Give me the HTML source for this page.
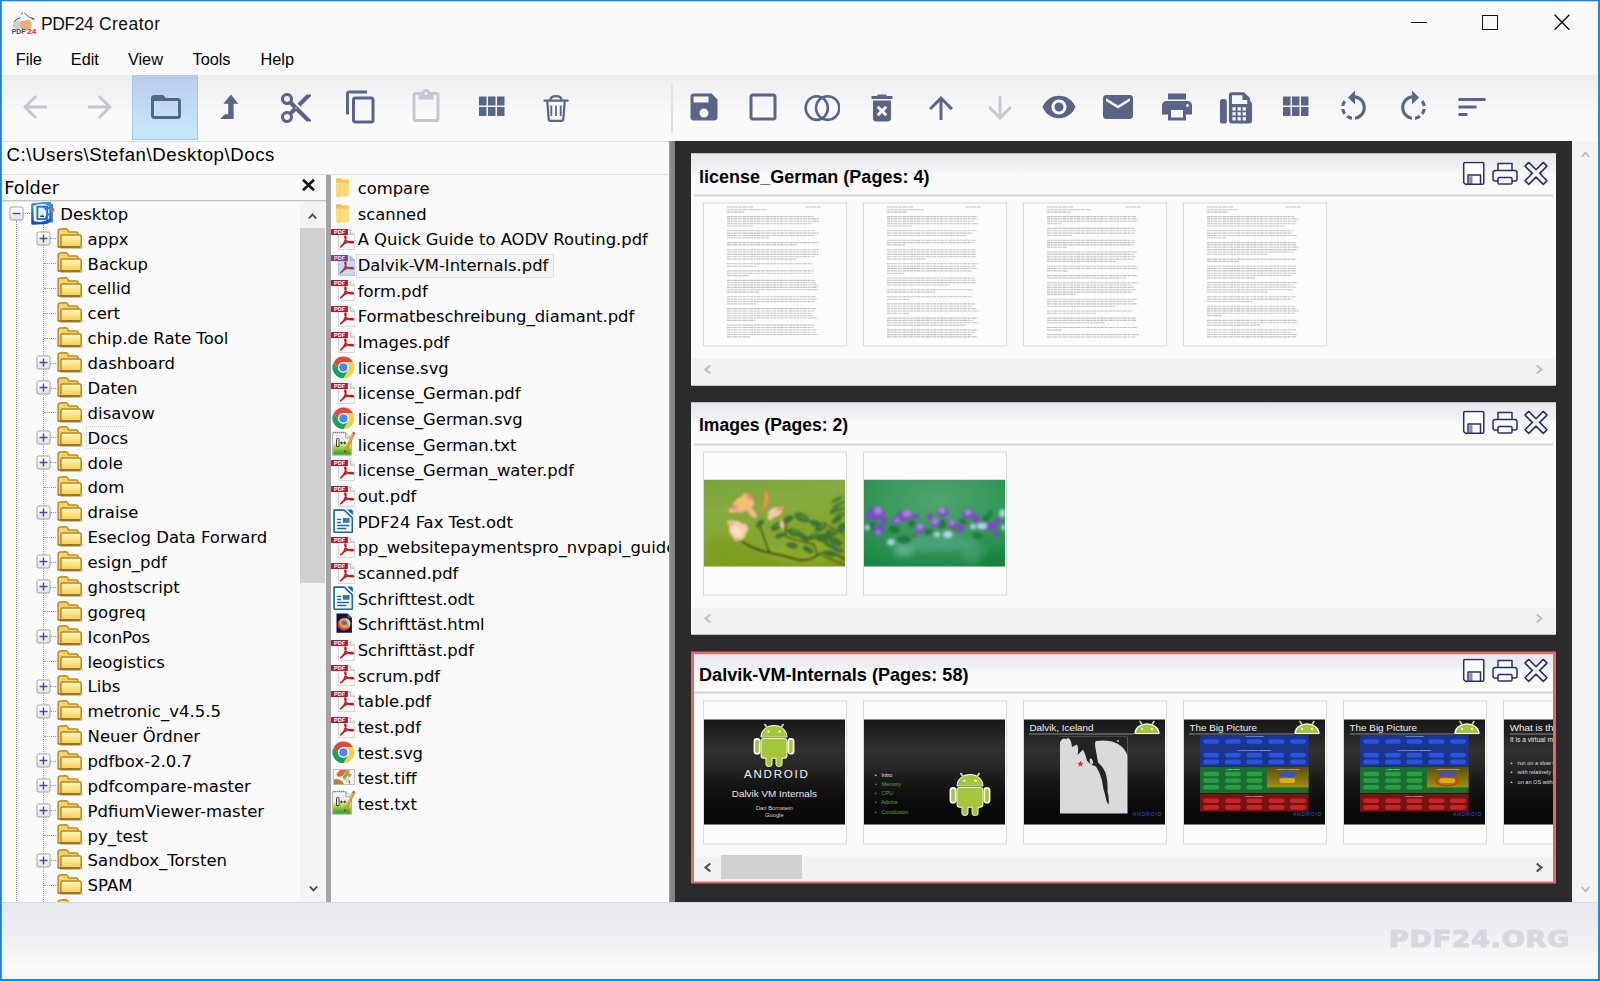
<!DOCTYPE html>
<html lang="en"><head><meta charset="utf-8"><title>PDF24 Creator</title>
<style>
*{box-sizing:border-box;margin:0;padding:0}
html,body{width:1600px;height:981px;overflow:hidden;background:#fafafa}
body{position:relative;font-family:"Liberation Sans",sans-serif;color:#000}
.a{position:absolute}
.t{position:absolute;white-space:pre;line-height:1}
.dj{font-family:"DejaVu Sans","Liberation Sans",sans-serif}
.tree{font-size:16.5px}
.fl{font-size:16.4px}
.ct{font-weight:bold;font-size:17.8px}
</style></head><body>

<svg width="0" height="0" style="position:absolute"><defs>
<linearGradient id="gbx" x1="0" y1="0" x2="0" y2="1"><stop offset="0" stop-color="#fff"/><stop offset=".5" stop-color="#fcfcfc"/><stop offset=".62" stop-color="#ececec"/><stop offset="1" stop-color="#e2e2e2"/></linearGradient>
<linearGradient id="gnp" x1="0" y1="0" x2="0" y2="1"><stop offset="0" stop-color="#f0f6c8"/><stop offset=".3" stop-color="#b7e05c"/><stop offset=".7" stop-color="#62b934"/><stop offset="1" stop-color="#2f9a2a"/></linearGradient>
<linearGradient id="gf1" x1="0" y1="0" x2="0" y2="1"><stop offset="0" stop-color="#fff8cc"/><stop offset=".45" stop-color="#fbe58a"/><stop offset="1" stop-color="#f1cd58"/></linearGradient>
<linearGradient id="gf2" x1="0" y1="0" x2="0" y2="1"><stop offset="0" stop-color="#f7e07c"/><stop offset="1" stop-color="#e9bf3c"/></linearGradient>
<symbol id="fold" viewBox="0 0 26 21">
 <path d="M3.200 20.300 H23.600 Q25.300 20.300 25.300 18.600" fill="none" stroke="#6b5210" stroke-opacity=".35" stroke-width="1.400"/>
 <path d="M1.100 18.800 V3.400 Q1.100 1.300 3.100 1.100 L8.300 .7 Q10.400 .7 10.900 2.300 L11.400 3.900 H19.200 Q20.900 3.900 20.900 5.700 V8" fill="#f5d768" stroke="#c18d24" stroke-width="1.500"/>
 <path d="M3.900 19 V8.700 Q3.900 7.100 5.500 7.100 H22.600 Q24.200 7.100 24.200 8.700 V17.400 Q24.200 19 22.600 19 Z" fill="url(#gf1)" stroke="#b98420" stroke-width="1.500"/>
 <path d="M1.100 18.200 Q1.100 19 2 19 H22.800" fill="none" stroke="#946a14" stroke-width="1.500"/>
</symbol>
<symbol id="wfold" viewBox="0 0 15 22">
 <path d="M1 2.2 Q1 1 2.2 1 H5.4 L6.8 2.6 H12.8 Q14 2.6 14 3.8 V19 H1 Z" fill="#f1c550"/>
 <path d="M1 5.4 H14 V18.6 Q14 19.4 13.2 19.4 H4.6 L4.6 21.2 L1 19.2 Z" fill="#fbdc7c"/>
 <path d="M4.8 5.4 V19.2" stroke="#f3cf66" stroke-width="1"/>
</symbol>
<symbol id="pdf" viewBox="0 0 24 21">
 <path d="M7.800 20.900 H23.600" stroke="#bdbdbd" stroke-width=".8" opacity=".7"/>
 <path d="M7.500 1 H19.400 L23.700 5.200 V20.300 H7.500 Z" fill="#fefefe" stroke="#d0d0d0" stroke-width=".9"/>
 <path d="M19.400 1 V5.200 H23.700" fill="#f0f0f0" stroke="#a8a8a8" stroke-width=".8"/>
 <path d="M9.500 17.900 C12 16.300 14.300 12.600 14.900 9 C15.200 7 13.900 6.500 13.900 8.100 C14.100 11.200 17 13.800 21.500 13.800 C22.800 13.800 22.600 12.500 20.900 12.500 C17 12.500 12.300 14.600 9.500 17.900 Z" fill="#c9262b" fill-opacity=".25" stroke="#c01a20" stroke-width="1.600" stroke-linejoin="round"/>
 <rect x="0" y="0" width="16.900" height="6.100" fill="#b01d2e"/>
 <text x="8.500" y="5.300" font-family="Liberation Sans,sans-serif" font-weight="bold" font-size="6" fill="#fff" text-anchor="middle" textLength="11" lengthAdjust="spacingAndGlyphs">PDF</text>
</symbol>
<symbol id="pdfs" viewBox="0 0 24 21">
 <path d="M7.800 20.900 H23.600" stroke="#9fb0c4" stroke-width=".8" opacity=".7"/>
 <path d="M7.500 1 H19.400 L23.700 5.200 V20.300 H7.500 Z" fill="#c5dbf1" stroke="#a9c0da" stroke-width=".9"/>
 <path d="M19.400 1 V5.200 H23.700" fill="#b4cbe6" stroke="#90a6c2" stroke-width=".8"/>
 <path d="M9.500 17.900 C12 16.300 14.300 12.600 14.900 9 C15.200 7 13.900 6.500 13.900 8.100 C14.100 11.200 17 13.800 21.500 13.800 C22.800 13.800 22.600 12.500 20.900 12.500 C17 12.500 12.300 14.600 9.500 17.900 Z" fill="#a63a5c" fill-opacity=".25" stroke="#a5385c" stroke-width="1.600" stroke-linejoin="round"/>
 <rect x="0" y="0" width="16.900" height="6.100" fill="#8c3f72"/>
 <text x="8.500" y="5.300" font-family="Liberation Sans,sans-serif" font-weight="bold" font-size="6" fill="#e9dff0" text-anchor="middle" textLength="11" lengthAdjust="spacingAndGlyphs">PDF</text>
</symbol>
<symbol id="chrome" viewBox="0 0 24 24">
 <circle cx="12" cy="12" r="11.3" fill="#fff"/>
 <path d="M2.04 6.25 A11.5 11.5 0 0 1 21.96 6.25 L12 6.25 A5.75 5.75 0 0 0 7.02 14.88 Z" fill="#dd4b3e"/>
 <path d="M2.04 6.25 A11.5 11.5 0 0 1 21.96 6.25 L12 6.25 A5.75 5.75 0 0 0 7.02 14.88 Z" fill="#ffcd42" transform="rotate(120 12 12)"/>
 <path d="M2.04 6.25 A11.5 11.5 0 0 1 21.96 6.25 L12 6.25 A5.75 5.75 0 0 0 7.02 14.88 Z" fill="#1aa15f" transform="rotate(240 12 12)"/>
 <circle cx="12" cy="12" r="5.400" fill="#f6f6f6"/>
 <circle cx="12" cy="12" r="4.300" fill="#4a8af4"/>
</symbol>
<symbol id="npp" viewBox="0 0 24 26">
 <path d="M.6 1.700 H14 L19.800 7 V24.800 H.6 Z" fill="#fcfcfa" stroke="#a9a9a4" stroke-width="1"/>
 <path d="M14 1.700 V7 H19.800" fill="#e4e4e0" stroke="#8e8e8a" stroke-width=".8"/>
 <path d="M1.200 1.500 h12.500" stroke="#7c7c78" stroke-width="1.300" stroke-dasharray="1 1"/>
 <path d="M2 5 h11 M2 7.500 h15 M2 10 h15" stroke="#cfe0ea" stroke-width=".7"/>
 <rect x="1.200" y="11.500" width="18" height="12.700" fill="url(#gnp)"/>
 <path d="M4.600 8.500 Q4.600 7.600 5.500 7.600 H6.300 Q7.200 7.600 7.200 8.500 V15.800 H4.600Z" fill="#f4f4f4" stroke="#222" stroke-width=".9"/>
 <path d="M8.300 12.100 h2.800 M9.700 10.700 v2.800 M11.600 12.100 h2.800 M13 10.700 v2.800" stroke="#1c1c1c" stroke-width=".9"/>
 <path d="M12.800 19.600 L20.900 2.300 L23 3.300 L14.900 20.600 L12.500 22.200 Z" fill="#eaa21e" stroke="#9a6510" stroke-width=".5"/>
 <path d="M14.200 16.600 L21.200 2.600" stroke="#f6c75a" stroke-width=".8"/>
 <path d="M20.900 2.300 L21.600 .8 L23.700 1.800 L23 3.300Z" fill="#c4352a"/>
 <path d="M12.800 19.600 L14.900 20.600 L12.500 22.200Z" fill="#4a3a20"/>
</symbol>
<symbol id="odt" viewBox="0 0 21 25">
 <path d="M1.100 1.200 H11.600 L19.700 9 V22.800 Q19.700 23.900 18.600 23.900 H2.200 Q1.100 23.900 1.100 22.800 Z" fill="#fdfeff" stroke="#186a9e" stroke-width="1.700" stroke-linejoin="round"/>
 <path d="M14.400 .6 H18.300 Q20.300 .6 20.300 2.600 V6.400 Z" fill="#0f6aa6"/>
 <path d="M4.200 10.600 h4 M4.200 13.700 h4 M4.200 16.900 h12.400 M4.200 20 h9.500" stroke="#186a9e" stroke-width="1.500"/>
 <rect x="10.400" y="9.600" width="6" height="3.900" fill="#2f7ab6" stroke="#186a9e" stroke-width=".8"/>
</symbol>
<symbol id="ffx" viewBox="0 0 17 21">
 <path d="M.5 .5 H11.800 L16.300 5 V20.300 H.5 Z" fill="#14124a"/>
 <path d="M11.800 .5 L16.300 5 H11.800Z" fill="#2a5ad0"/>
 <circle cx="8.300" cy="11.400" r="6.400" fill="#ff9a1e"/>
 <path d="M2 10 A6.400 6.400 0 0 0 14.600 12.600 A6.200 6.200 0 0 1 5.600 14.600 A5 5 0 0 1 4.600 7.200 Q2.600 7.800 2 10Z" fill="#f0322a"/>
 <path d="M9.500 4.800 Q13.800 5.600 14.700 10.400 Q14.600 13.600 12.600 15.600 Q14.200 11.600 11.200 9.400 Q10.200 6.800 9.500 4.800Z" fill="#ffd43a"/>
 <circle cx="8.600" cy="10.800" r="2.900" fill="#2a7af0"/>
 <path d="M6 11.400 Q8.600 13.400 11.400 11.600 Q10.200 14.600 7.600 14 Q6.400 13.200 6 11.400Z" fill="#ffb43a"/>
</symbol>
<symbol id="tif" viewBox="0 0 22 16">
 <rect x=".4" y=".4" width="21.200" height="15.200" fill="#f6f3ee" stroke="#b5b1aa" stroke-width=".8"/>
 <path d="M3.200 5.600 L7 .9 H14 L9.600 6.800 L5.600 8.200Z" fill="#f1632a"/>
 <path d="M13.800 1.200 L16.600 1 L16.200 4.400 L12.600 9.400 L11 11 L9.600 8.400Z" fill="#86b040"/>
 <path d="M14.600 5.600 L18.600 4.600 L18.200 7 L15.600 8.600Z" fill="#b8946a"/>
 <path d="M.9 10.400 Q5 9.200 9.600 12.400 L11 15.200 H.9Z" fill="#b5804a"/>
 <path d="M12.600 9.600 L13.600 14 M15 8.800 L15.600 13.600" stroke="#9a9a9a" stroke-width=".7"/>
 <path d="M16.200 11.600 L16.800 14.600" stroke="#cc3030" stroke-width="1"/>
</symbol>
<symbol id="robot" viewBox="0 0 60 70">
 <g fill="#a4c639" stroke="#fff" stroke-width="2.4" stroke-linejoin="round">
 <path d="M17 6 L21 12 M43 6 L39 12" stroke-linecap="round"/>
 <path d="M12 24 A18 16 0 0 1 48 24 Z"/>
 <rect x="12" y="27" width="36" height="28" rx="3.500"/>
 <rect x="2" y="27" width="7.6" height="22" rx="3.800"/>
 <rect x="50.400" y="27" width="7.6" height="22" rx="3.800"/>
 <rect x="19" y="50" width="7.6" height="17" rx="3.800"/>
 <rect x="33.400" y="50" width="7.6" height="17" rx="3.800"/>
 </g>
 <g fill="#a4c639"><path d="M12 24 A18 16 0 0 1 48 24 Z"/><rect x="12" y="27" width="36" height="28" rx="3.500"/><rect x="19" y="48" width="7.6" height="19" rx="3.800"/><rect x="33.400" y="48" width="7.600" height="19" rx="3.800"/>
 <path d="M17 6 L21 12 M43 6 L39 12" stroke="#a4c639" stroke-width="1.4" stroke-linecap="round"/></g>
 <circle cx="22" cy="16.500" r="1.700" fill="#fff"/><circle cx="38" cy="16.500" r="1.700" fill="#fff"/>
</symbol>
<symbol id="rhead" viewBox="0 0 40 24">
 <g fill="#a4c639" stroke="#fff" stroke-width="2" stroke-linejoin="round"><path d="M10 3 L13 8 M30 3 L27 8" stroke-linecap="round"/><path d="M3 22 A17 15 0 0 1 37 22 Z"/></g>
 <path d="M10 3 L13 8 M30 3 L27 8" stroke="#a4c639" stroke-width="1.200" stroke-linecap="round"/>
 <circle cx="13" cy="15" r="1.500" fill="#fff"/><circle cx="27" cy="15" r="1.500" fill="#fff"/>
</symbol>
<linearGradient id="oly" x1="0" y1="0" x2="0" y2="1"><stop offset="0" stop-color="#5c4c10"/><stop offset="1" stop-color="#a38c12"/></linearGradient>
<filter id="bl1"><feGaussianBlur stdDeviation="1.4"/></filter>
<filter id="bl2"><feGaussianBlur stdDeviation="3"/></filter>
<filter id="bl05"><feGaussianBlur stdDeviation="1.05"/></filter>
<filter id="bl0"><feGaussianBlur stdDeviation=".6"/></filter>
</defs></svg>

<div class="a" style="left:0;top:0;width:1600px;height:44px;background:#fafafa"></div>
<svg class="a" style="left:11px;top:9px" width="27" height="26" viewBox="0 0 27 26">
<g filter="url(#bl0)"><ellipse cx="9" cy="13" rx="6" ry="6.500" fill="#e3e3e3"/><ellipse cx="6.500" cy="16.500" rx="4.500" ry="4.200" fill="#cfcfcf"/><ellipse cx="9" cy="6" rx="4.500" ry="4" fill="#f1f1f1"/><ellipse cx="18" cy="16" rx="3" ry="5" fill="#c9c9c9"/>
<path d="M9.600 12.500 Q14.500 9 19.400 12.600 Q20.400 17 17.600 20 Q14.500 21.400 11 19.800 Q8.400 16.400 9.600 12.500Z" fill="#e9b06c"/>
<path d="M9.800 18 Q12.500 21.600 17 20.400 L15 21.400 Q11.600 21.600 9.800 18Z" fill="#5a6a82"/>
<ellipse cx="12.800" cy="9" rx="3.500" ry="2.800" fill="#fcfcfc"/></g>
<path d="M2.800 13 Q5.600 9.600 9.400 8.600 M10.200 5.400 Q11.200 3.600 12 3.600 M13.400 3.800 Q17 8.600 22.800 9.800" stroke="#2a2a2a" stroke-width=".8" fill="none"/>
<path d="M20.500 9.600 L23.400 10.400" stroke="#555" stroke-width="1.300"/>
<text x=".7" y="25.200" font-family="Liberation Sans,sans-serif" font-size="7.200" font-weight="bold" fill="#4a4a4a" textLength="13.800" lengthAdjust="spacingAndGlyphs">PDF</text>
<text x="15.800" y="25.200" font-family="Liberation Mono,monospace" font-weight="bold" font-size="7.600" fill="#ff1c1c" textLength="9.800" lengthAdjust="spacingAndGlyphs">24</text>
</svg>
<div class="t" style="left:41px;top:16.300px;font-size:17.5px;color:#101010"><span style="letter-spacing:-.45px">PDF24</span><span style="letter-spacing:.9px"> </span><span style="letter-spacing:.46px">Creator</span></div>
<div class="a" style="left:1411px;top:21.600px;width:16px;height:1.400px;background:#111"></div>
<div class="a" style="left:1482px;top:14.600px;width:15.600px;height:15.400px;border:1.400px solid #111"></div>
<svg class="a" style="left:1553px;top:13px" width="18" height="18" viewBox="0 0 18 18"><path d="M1.600 1.800 L16.400 16.800 M16.400 1.800 L1.600 16.800" stroke="#111" stroke-width="1.400"/></svg>
<div class="t" style="left:15.7px;top:50.500px;font-size:16.3px">File</div>
<div class="t" style="left:70.8px;top:50.500px;font-size:16.3px">Edit</div>
<div class="t" style="left:127.9px;top:50.500px;font-size:16.3px">View</div>
<div class="t" style="left:192.5px;top:50.500px;font-size:16.3px">Tools</div>
<div class="t" style="left:260.5px;top:50.500px;font-size:16.3px">Help</div>
<div class="a" style="left:2px;top:75px;width:1596px;height:66px;background:linear-gradient(#eeeef0 0,#f0f0f2 10px,#f4f4f6 24px,#fafafa 39px,#fafafa 66px)"></div>
<div class="a" style="left:132px;top:75px;width:66px;height:65px;background:linear-gradient(#b9cdea,#c2def5 60%,#c6e8f9);border:1px solid #9ccbf0;border-top-color:#b4cdec"></div>
<div class="a" style="left:670.500px;top:84px;width:2.600px;height:49px;background:#dfe1e7"></div>
<svg class="a" style="left:17.2px;top:89.3px" width="36" height="36" viewBox="0 0 24 24"><path fill="#c4c8d2" d="M20 11H7.83l5.59-5.59L12 4l-8 8 8 8 1.41-1.41L7.83 13H20v-2z"/></svg>
<svg class="a" style="left:82.0px;top:89.3px" width="36" height="36" viewBox="0 0 24 24"><path fill="#c4c8d2" d="M12 4l-1.41 1.41L16.17 11H4v2h12.17l-5.58 5.59L12 20l8-8z"/></svg>
<svg class="a" style="left:148.0px;top:89.3px" width="36" height="36" viewBox="0 0 24 24"><path fill="#586587" d="M20 6h-8l-2-2H4c-1.1 0-1.99.9-1.99 2L2 18c0 1.1.9 2 2 2h16c1.1 0 2-.9 2-2V8c0-1.1-.9-2-2-2zm0 12H4V8h16v10z"/></svg>
<svg class="a" style="left:211.5px;top:89.3px" width="36" height="36" viewBox="0 0 24 24"><path fill="#586587" d="M12.6 3.6 L17.6 9.9 H14.4 V20 H5.4 L8.6 16.9 H10.8 V9.9 H7.6 Z"/></svg>
<svg class="a" style="left:278.0px;top:89.5px" width="36" height="36" viewBox="0 0 24 24"><path fill="#586587" d="M9.64 7.64c.23-.5.36-1.05.36-1.64 0-2.21-1.79-4-4-4S2 3.79 2 6s1.79 4 4 4c.59 0 1.14-.13 1.64-.36L10 12l-2.36 2.36C7.14 14.13 6.59 14 6 14c-2.21 0-4 1.79-4 4s1.79 4 4 4 4-1.79 4-4c0-.59-.13-1.14-.36-1.64L12 14l7 7h3v-1L9.64 7.64zM6 8c-1.1 0-2-.89-2-2s.9-2 2-2 2 .89 2 2-.9 2-2 2zm0 12c-1.1 0-2-.89-2-2s.9-2 2-2 2 .89 2 2-.9 2-2 2zm6-7.5c-.28 0-.5-.22-.5-.5s.22-.5.5-.5.5.22.5.5-.22.5-.5.5zM19 3l-6 6 2 2 7-7V3z"/></svg>
<svg class="a" style="left:343.0px;top:89.3px" width="36" height="36" viewBox="0 0 24 24"><path fill="#586587" d="M16 1H4c-1.1 0-2 .9-2 2v14h2V3h12V1zm3 4H8c-1.1 0-2 .9-2 2v14c0 1.1.9 2 2 2h11c1.1 0 2-.9 2-2V7c0-1.1-.9-2-2-2zm0 16H8V7h11v14z"/></svg>
<svg class="a" style="left:408.1px;top:89.3px" width="36" height="36" viewBox="0 0 24 24"><path fill="#c4c8d2" d="M19 2h-4.18C14.4.84 13.3 0 12 0c-1.3 0-2.4.84-2.82 2H5c-1.1 0-2 .9-2 2v16c0 1.1.9 2 2 2h14c1.1 0 2-.9 2-2V4c0-1.1-.9-2-2-2zm-7 0c.55 0 1 .45 1 1s-.45 1-1 1-1-.45-1-1 .45-1 1-1zm7 18H5V4h2v3h10V4h2v16z"/></svg>
<svg class="a" style="left:473.3px;top:88.8px" width="36" height="36" viewBox="0 0 24 24"><path fill="#586587" d="M4 11h5V5H4v6zm0 7h5v-6H4v6zm6 0h5v-6h-5v6zm6 0h5v-6h-5v6zm-6-7h5V5h-5v6zm6-6v6h5V5h-5z"/></svg>
<svg class="a" style="left:538.3px;top:89.6px" width="36" height="36" viewBox="0 0 24 24"><g fill="none" stroke="#586587" stroke-linejoin="round"><path d="M4.300 7 H19.800" stroke-width="1.500" stroke-linecap="round"/><path d="M8.300 6.800 Q8.400 4.100 12 4.100 Q15.600 4.100 15.700 6.800" stroke-width="1.400"/><path d="M6.200 7.400 L7.100 19.300 Q7.200 20.600 8.500 20.600 H15.500 Q16.800 20.600 16.900 19.300 L17.800 7.400" stroke-width="1.500"/><path d="M8.900 10.300 V17.400 M12 10.300 V17.400 M15.100 10.300 V17.400" stroke-width="1.200"/></g></svg>
<svg class="a" style="left:686.2px;top:88.9px" width="36" height="36" viewBox="0 0 24 24"><path fill="#586587" d="M17 3H5c-1.11 0-2 .9-2 2v14c0 1.1.89 2 2 2h14c1.1 0 2-.9 2-2V7l-4-4zm-5 16c-1.66 0-3-1.34-3-3s1.34-3 3-3 3 1.34 3 3-1.34 3-3 3zm3-10H5V5h10v4z"/></svg>
<svg class="a" style="left:745.4px;top:88.9px" width="36" height="36" viewBox="0 0 24 24"><path fill="#586587" d="M19 5v14H5V5h14m0-2H5c-1.1 0-2 .9-2 2v14c0 1.1.9 2 2 2h14c1.1 0 2-.9 2-2V5c0-1.1-.9-2-2-2z"/></svg>
<svg class="a" style="left:804.1px;top:89.6px" width="36" height="36" viewBox="0 0 24 24"><g fill="none" stroke="#586587" stroke-width="1.700"><ellipse cx="8.500" cy="12" rx="7.400" ry="7.900"/><ellipse cx="15.800" cy="12" rx="7.800" ry="7.900"/></g></svg>
<svg class="a" style="left:863.6px;top:89.6px" width="36" height="36" viewBox="0 0 24 24"><path fill="#586587" d="M6 19c0 1.1.9 2 2 2h8c1.1 0 2-.9 2-2V7H6v12zm2.46-7.12l1.41-1.41L12 12.59l2.12-2.12 1.41 1.41L13.41 14l2.12 2.12-1.41 1.41L12 15.41l-2.12 2.12-1.41-1.41L10.59 14l-2.13-2.12zM15.5 4l-1-1h-5l-1 1H5v2h14V4z"/></svg>
<svg class="a" style="left:922.8px;top:89.6px" width="36" height="36" viewBox="0 0 24 24"><path fill="#586587" d="M4 12l1.41 1.41L11 7.83V20h2V7.83l5.58 5.59L20 12l-8-8-8 8z"/></svg>
<svg class="a" style="left:981.5px;top:89.6px" width="36" height="36" viewBox="0 0 24 24"><path fill="#c4c8d2" d="M20 12l-1.41-1.41L13 16.17V4h-2v12.17l-5.58-5.59L4 12l8 8 8-8z"/></svg>
<svg class="a" style="left:1040.7px;top:89.1px" width="36" height="36" viewBox="0 0 24 24"><path fill="#586587" d="M12 4.5C7 4.5 2.73 7.61 1 12c1.73 4.39 6 7.5 11 7.5s9.27-3.11 11-7.5c-1.73-4.39-6-7.5-11-7.5zM12 17c-2.76 0-5-2.24-5-5s2.24-5 5-5 5 2.24 5 5-2.24 5-5 5zm0-8c-1.66 0-3 1.34-3 3s1.34 3 3 3 3-1.34 3-3-1.34-3-3-3z"/></svg>
<svg class="a" style="left:1099.9px;top:89.3px" width="36" height="36" viewBox="0 0 24 24"><path fill="#586587" d="M20 4H4c-1.1 0-1.99.9-1.99 2L2 18c0 1.1.9 2 2 2h16c1.1 0 2-.9 2-2V6c0-1.1-.9-2-2-2zm0 4l-8 5-8-5V6l8 5 8-5v2z"/></svg>
<svg class="a" style="left:1158.9px;top:89.2px" width="36" height="36" viewBox="0 0 24 24"><path fill="#586587" d="M19 8H5c-1.66 0-3 1.34-3 3v6h4v4h12v-4h4v-6c0-1.66-1.34-3-3-3zm-3 11H8v-5h8v5zm3-7c-.55 0-1-.45-1-1s.45-1 1-1 1 .45 1 1-.45 1-1 1zm-1-9H6v4h12V3z"/></svg>
<svg class="a" style="left:1217.6px;top:90.1px" width="36" height="36" viewBox="0 0 24 24"><g fill="#586587"><rect x="1.300" y="6" width="4.600" height="16.400" rx="1.800"/><path d="M7.300 3.300 Q7.300 1.500 9.100 1.500 H17.400 L21.400 5.500 V7.400 Q22.700 7.900 22.700 9.600 V20.400 Q22.700 22.400 20.700 22.400 H9.300 Q7.300 22.400 7.300 20.400 Z"/></g><path d="M9.300 3.500 H16.300 V6.600 H19.500 V9.300 H9.300 Z" fill="#f6f6f8"/><g fill="#f6f6f8"><rect x="9.600" y="11.500" width="2.200" height="2.200"/><rect x="13" y="11.500" width="2.200" height="2.200"/><rect x="16.400" y="11.500" width="2.200" height="2.200"/><rect x="9.600" y="14.800" width="2.200" height="2.200"/><rect x="13" y="14.800" width="2.200" height="2.200"/><rect x="16.400" y="14.800" width="2.200" height="2.200"/><rect x="9.600" y="18.100" width="2.200" height="2.200"/><rect x="13" y="18.100" width="2.200" height="2.200"/><rect x="16.400" y="18.100" width="2.200" height="2.200"/></g></svg>
<svg class="a" style="left:1277.1px;top:88.8px" width="36" height="36" viewBox="0 0 24 24"><path fill="#586587" d="M4 11h5V5H4v6zm0 7h5v-6H4v6zm6 0h5v-6h-5v6zm6 0h5v-6h-5v6zm-6-7h5V5h-5v6zm6-6v6h5V5h-5z"/></svg>
<svg class="a" style="left:1334.8px;top:88.8px" width="37" height="37" viewBox="0 0 24 24"><path fill="#586587" d="M7.11 8.53L5.7 7.11C4.8 8.27 4.24 9.61 4.07 11h2.02c.14-.87.49-1.72 1.02-2.47zM6.09 13H4.07c.17 1.39.72 2.73 1.62 3.89l1.41-1.42c-.52-.75-.87-1.59-1.01-2.47zm1.01 5.32c1.16.9 2.51 1.44 3.9 1.61V17.9c-.87-.15-1.71-.49-2.46-1.03L7.1 18.32zM13 4.07V1L8.45 5.55 13 10V6.09c2.84.48 5 2.94 5 5.91s-2.16 5.43-5 5.91v2.02c3.95-.49 7-3.85 7-7.93s-3.05-7.44-7-7.93z"/></svg>
<svg class="a" style="left:1394.5px;top:88.8px" width="37" height="37" viewBox="0 0 24 24"><path fill="#586587" d="M15.55 5.55L11 1v3.07C7.06 4.56 4 7.92 4 12s3.05 7.44 7 7.93v-2.02c-2.84-.48-5-2.94-5-5.91s2.16-5.43 5-5.91V10l4.55-4.45zM19.93 11c-.17-1.39-.72-2.73-1.62-3.89l-1.42 1.42c.54.75.88 1.6 1.02 2.47h2.02zM13 17.9v2.02c1.39-.17 2.74-.71 3.9-1.61l-1.44-1.44c-.75.54-1.59.89-2.46 1.03zm3.89-2.42l1.42 1.41c.9-1.16 1.45-2.5 1.62-3.89h-2.02c-.14.87-.48 1.72-1.02 2.48z"/></svg>
<svg class="a" style="left:1453.8px;top:89.2px" width="36" height="36" viewBox="0 0 24 24"><path fill="#586587" d="M3 18h6v-2H3v2zM3 6v2h18V6H3zm0 7h12v-2H3v2z"/></svg>
<div class="a" style="left:2px;top:141px;width:667px;height:1px;background:#e0dede"></div>
<div class="t" style="left:6.600px;top:146.400px;font-size:18.67px;letter-spacing:.55px">C:\Users\Stefan\Desktop\Docs</div>
<div class="a" style="left:2px;top:174px;width:667px;height:1px;background:#e0dede"></div>
<div class="t dj" style="left:4.300px;top:180px;font-size:17.7px">Folder</div>
<svg class="a" style="left:300.500px;top:177.800px" width="15" height="14" viewBox="0 0 15 14"><path d="M2 1.800 L13 12.200 M13 1.800 L2 12.200" stroke="#111" stroke-width="2.700"/></svg>
<div class="a" style="left:2px;top:200px;width:324px;height:1px;background:#c2c2c2"></div><div class="a" style="left:2px;top:201px;width:324px;height:1px;background:#e4e4e4"></div>
<div class="a" style="left:2px;top:202px;width:324px;height:700px;overflow:hidden">
<div class="a" style="left:14px;top:19px;width:0;height:700px;border-left:1px dotted #9a9a9a"></div>
<div class="a" style="left:41px;top:22px;width:0;height:700px;border-left:1px dotted #9a9a9a"></div>
<div class="a" style="left:21px;top:11.4px;width:9px;height:0;border-top:1px dotted #9a9a9a"></div>
<svg class="a" style="left:6.65px;top:4.40px" width="15" height="15" viewBox="0 0 15 15"><rect x="1" y="1" width="13" height="13" rx="1.600" fill="url(#gbx)" stroke="#a0a0a0" stroke-width="1"/><path d="M3.500 7.500 H11.500" stroke="#3c4ba6" stroke-width="1.400"/></svg>
<svg class="a" style="left:28px;top:-2.0px" width="26" height="26" viewBox="0 0 26 26">
<defs><linearGradient id="gdk" x1="0" y1="0" x2="0" y2="1"><stop offset="0" stop-color="#3a96f2"/><stop offset=".5" stop-color="#1a74e2"/><stop offset="1" stop-color="#0a48be"/></linearGradient></defs>
<rect x="20.600" y="4" width="2.500" height="18.500" fill="#46525e" opacity=".75"/>
<path d="M1.200 4.400 Q1.200 3.300 2.300 3.200 L12.800 2.300 L13.600 1.100 H21.200 V21.800 L16.400 24 L3.200 24.800 Q1.200 24.800 1.200 22.900Z" fill="url(#gdk)"/>
<path d="M3.300 6.400 Q8 4.300 13.400 4.600 L19.300 6.200 V18.800 Q16 21.400 10.200 21.900 L3.900 21.200 Z" fill="#fdf7bc"/>
<path d="M3.300 6.400 Q8 4.300 13.400 4.600 L17 5.600" fill="none" stroke="#f4fbff" stroke-width="1.200"/>
<rect x="7.400" y="6.700" width="9.800" height="12.400" fill="#e6f2fb" stroke="#1c72e4" stroke-width="1.900"/>
<path d="M14 7 L16.600 10.200 M17.200 9.200 L19.600 7.400 M15.500 17.600 L19 13.600" stroke="#1c72e4" stroke-width="1.600"/>
<rect x="10.300" y="15.700" width="3.600" height="1.200" fill="#111"/><rect x="11.700" y="14.300" width="1.100" height="1.400" fill="#7a5a2a"/>
<circle cx="22.700" cy="10" r="1.900" fill="#f2731c"/><circle cx="22.700" cy="9.300" r=".8" fill="#e03a1a"/>
</svg>
<div class="t dj tree" style="left:58.3px;top:4.8px">Desktop</div>
<div class="a" style="left:48px;top:36.3px;width:8px;height:0;border-top:1px dotted #9a9a9a"></div>
<svg class="a" style="left:34.05px;top:28.97px" width="15" height="15" viewBox="0 0 15 15"><rect x="1" y="1" width="13" height="13" rx="1.600" fill="url(#gbx)" stroke="#a0a0a0" stroke-width="1"/><path d="M3.500 7.500 H11.500 M7.500 3.500 V11.500" stroke="#3c4ba6" stroke-width="1.400"/></svg>
<svg class="a" style="left:55.4px;top:25.5px" width="26" height="21"><use href="#fold"/></svg>
<div class="t dj tree" style="left:85.6px;top:29.7px">appx</div>
<div class="a" style="left:42px;top:61.1px;width:14px;height:0;border-top:1px dotted #9a9a9a"></div>
<svg class="a" style="left:55.4px;top:50.3px" width="26" height="21"><use href="#fold"/></svg>
<div class="t dj tree" style="left:85.6px;top:54.5px">Backup</div>
<div class="a" style="left:42px;top:86.0px;width:14px;height:0;border-top:1px dotted #9a9a9a"></div>
<svg class="a" style="left:55.4px;top:75.2px" width="26" height="21"><use href="#fold"/></svg>
<div class="t dj tree" style="left:85.6px;top:79.4px">cellid</div>
<div class="a" style="left:42px;top:110.9px;width:14px;height:0;border-top:1px dotted #9a9a9a"></div>
<svg class="a" style="left:55.4px;top:100.1px" width="26" height="21"><use href="#fold"/></svg>
<div class="t dj tree" style="left:85.6px;top:104.3px">cert</div>
<div class="a" style="left:42px;top:135.8px;width:14px;height:0;border-top:1px dotted #9a9a9a"></div>
<svg class="a" style="left:55.4px;top:124.9px" width="26" height="21"><use href="#fold"/></svg>
<div class="t dj tree" style="left:85.6px;top:129.1px">chip.de Rate Tool</div>
<div class="a" style="left:48px;top:160.6px;width:8px;height:0;border-top:1px dotted #9a9a9a"></div>
<svg class="a" style="left:34.05px;top:153.32px" width="15" height="15" viewBox="0 0 15 15"><rect x="1" y="1" width="13" height="13" rx="1.600" fill="url(#gbx)" stroke="#a0a0a0" stroke-width="1"/><path d="M3.500 7.500 H11.500 M7.500 3.500 V11.500" stroke="#3c4ba6" stroke-width="1.400"/></svg>
<svg class="a" style="left:55.4px;top:149.8px" width="26" height="21"><use href="#fold"/></svg>
<div class="t dj tree" style="left:85.6px;top:154.0px">dashboard</div>
<div class="a" style="left:48px;top:185.5px;width:8px;height:0;border-top:1px dotted #9a9a9a"></div>
<svg class="a" style="left:34.05px;top:178.19px" width="15" height="15" viewBox="0 0 15 15"><rect x="1" y="1" width="13" height="13" rx="1.600" fill="url(#gbx)" stroke="#a0a0a0" stroke-width="1"/><path d="M3.500 7.500 H11.500 M7.500 3.500 V11.500" stroke="#3c4ba6" stroke-width="1.400"/></svg>
<svg class="a" style="left:55.4px;top:174.7px" width="26" height="21"><use href="#fold"/></svg>
<div class="t dj tree" style="left:85.6px;top:178.9px">Daten</div>
<div class="a" style="left:42px;top:210.4px;width:14px;height:0;border-top:1px dotted #9a9a9a"></div>
<svg class="a" style="left:55.4px;top:199.6px" width="26" height="21"><use href="#fold"/></svg>
<div class="t dj tree" style="left:85.6px;top:203.8px">disavow</div>
<div class="a" style="left:48px;top:235.2px;width:8px;height:0;border-top:1px dotted #9a9a9a"></div>
<svg class="a" style="left:34.05px;top:227.93px" width="15" height="15" viewBox="0 0 15 15"><rect x="1" y="1" width="13" height="13" rx="1.600" fill="url(#gbx)" stroke="#a0a0a0" stroke-width="1"/><path d="M3.500 7.500 H11.500 M7.500 3.500 V11.500" stroke="#3c4ba6" stroke-width="1.400"/></svg>
<svg class="a" style="left:55.4px;top:224.4px" width="26" height="21"><use href="#fold"/></svg>
<div class="a" style="left:83.5px;top:224.2px;width:41.500px;height:23px;border:1px dotted #c9c9c9"></div>
<div class="t dj tree" style="left:85.6px;top:228.6px">Docs</div>
<div class="a" style="left:48px;top:260.1px;width:8px;height:0;border-top:1px dotted #9a9a9a"></div>
<svg class="a" style="left:34.05px;top:252.80px" width="15" height="15" viewBox="0 0 15 15"><rect x="1" y="1" width="13" height="13" rx="1.600" fill="url(#gbx)" stroke="#a0a0a0" stroke-width="1"/><path d="M3.500 7.500 H11.500 M7.500 3.500 V11.500" stroke="#3c4ba6" stroke-width="1.400"/></svg>
<svg class="a" style="left:55.4px;top:249.3px" width="26" height="21"><use href="#fold"/></svg>
<div class="t dj tree" style="left:85.6px;top:253.5px">dole</div>
<div class="a" style="left:42px;top:285.0px;width:14px;height:0;border-top:1px dotted #9a9a9a"></div>
<svg class="a" style="left:55.4px;top:274.2px" width="26" height="21"><use href="#fold"/></svg>
<div class="t dj tree" style="left:85.6px;top:278.4px">dom</div>
<div class="a" style="left:48px;top:309.8px;width:8px;height:0;border-top:1px dotted #9a9a9a"></div>
<svg class="a" style="left:34.05px;top:302.54px" width="15" height="15" viewBox="0 0 15 15"><rect x="1" y="1" width="13" height="13" rx="1.600" fill="url(#gbx)" stroke="#a0a0a0" stroke-width="1"/><path d="M3.500 7.500 H11.500 M7.500 3.500 V11.500" stroke="#3c4ba6" stroke-width="1.400"/></svg>
<svg class="a" style="left:55.4px;top:299.0px" width="26" height="21"><use href="#fold"/></svg>
<div class="t dj tree" style="left:85.6px;top:303.2px">draise</div>
<div class="a" style="left:42px;top:334.7px;width:14px;height:0;border-top:1px dotted #9a9a9a"></div>
<svg class="a" style="left:55.4px;top:323.9px" width="26" height="21"><use href="#fold"/></svg>
<div class="t dj tree" style="left:85.6px;top:328.1px">Eseclog Data Forward</div>
<div class="a" style="left:48px;top:359.6px;width:8px;height:0;border-top:1px dotted #9a9a9a"></div>
<svg class="a" style="left:34.05px;top:352.28px" width="15" height="15" viewBox="0 0 15 15"><rect x="1" y="1" width="13" height="13" rx="1.600" fill="url(#gbx)" stroke="#a0a0a0" stroke-width="1"/><path d="M3.500 7.500 H11.500 M7.500 3.500 V11.500" stroke="#3c4ba6" stroke-width="1.400"/></svg>
<svg class="a" style="left:55.4px;top:348.8px" width="26" height="21"><use href="#fold"/></svg>
<div class="t dj tree" style="left:85.6px;top:353.0px">esign_pdf</div>
<div class="a" style="left:48px;top:384.5px;width:8px;height:0;border-top:1px dotted #9a9a9a"></div>
<svg class="a" style="left:34.05px;top:377.15px" width="15" height="15" viewBox="0 0 15 15"><rect x="1" y="1" width="13" height="13" rx="1.600" fill="url(#gbx)" stroke="#a0a0a0" stroke-width="1"/><path d="M3.500 7.500 H11.500 M7.500 3.500 V11.500" stroke="#3c4ba6" stroke-width="1.400"/></svg>
<svg class="a" style="left:55.4px;top:373.7px" width="26" height="21"><use href="#fold"/></svg>
<div class="t dj tree" style="left:85.6px;top:377.9px">ghostscript</div>
<div class="a" style="left:42px;top:409.3px;width:14px;height:0;border-top:1px dotted #9a9a9a"></div>
<svg class="a" style="left:55.4px;top:398.5px" width="26" height="21"><use href="#fold"/></svg>
<div class="t dj tree" style="left:85.6px;top:402.7px">gogreq</div>
<div class="a" style="left:48px;top:434.2px;width:8px;height:0;border-top:1px dotted #9a9a9a"></div>
<svg class="a" style="left:34.05px;top:426.89px" width="15" height="15" viewBox="0 0 15 15"><rect x="1" y="1" width="13" height="13" rx="1.600" fill="url(#gbx)" stroke="#a0a0a0" stroke-width="1"/><path d="M3.500 7.500 H11.500 M7.500 3.500 V11.500" stroke="#3c4ba6" stroke-width="1.400"/></svg>
<svg class="a" style="left:55.4px;top:423.4px" width="26" height="21"><use href="#fold"/></svg>
<div class="t dj tree" style="left:85.6px;top:427.6px">IconPos</div>
<div class="a" style="left:42px;top:459.1px;width:14px;height:0;border-top:1px dotted #9a9a9a"></div>
<svg class="a" style="left:55.4px;top:448.3px" width="26" height="21"><use href="#fold"/></svg>
<div class="t dj tree" style="left:85.6px;top:452.5px">leogistics</div>
<div class="a" style="left:48px;top:483.9px;width:8px;height:0;border-top:1px dotted #9a9a9a"></div>
<svg class="a" style="left:34.05px;top:476.63px" width="15" height="15" viewBox="0 0 15 15"><rect x="1" y="1" width="13" height="13" rx="1.600" fill="url(#gbx)" stroke="#a0a0a0" stroke-width="1"/><path d="M3.500 7.500 H11.500 M7.500 3.500 V11.500" stroke="#3c4ba6" stroke-width="1.400"/></svg>
<svg class="a" style="left:55.4px;top:473.1px" width="26" height="21"><use href="#fold"/></svg>
<div class="t dj tree" style="left:85.6px;top:477.3px">Libs</div>
<div class="a" style="left:48px;top:508.8px;width:8px;height:0;border-top:1px dotted #9a9a9a"></div>
<svg class="a" style="left:34.05px;top:501.50px" width="15" height="15" viewBox="0 0 15 15"><rect x="1" y="1" width="13" height="13" rx="1.600" fill="url(#gbx)" stroke="#a0a0a0" stroke-width="1"/><path d="M3.500 7.500 H11.500 M7.500 3.500 V11.500" stroke="#3c4ba6" stroke-width="1.400"/></svg>
<svg class="a" style="left:55.4px;top:498.0px" width="26" height="21"><use href="#fold"/></svg>
<div class="t dj tree" style="left:85.6px;top:502.2px">metronic_v4.5.5</div>
<div class="a" style="left:42px;top:533.7px;width:14px;height:0;border-top:1px dotted #9a9a9a"></div>
<svg class="a" style="left:55.4px;top:522.9px" width="26" height="21"><use href="#fold"/></svg>
<div class="t dj tree" style="left:85.6px;top:527.1px">Neuer Ördner</div>
<div class="a" style="left:48px;top:558.5px;width:8px;height:0;border-top:1px dotted #9a9a9a"></div>
<svg class="a" style="left:34.05px;top:551.24px" width="15" height="15" viewBox="0 0 15 15"><rect x="1" y="1" width="13" height="13" rx="1.600" fill="url(#gbx)" stroke="#a0a0a0" stroke-width="1"/><path d="M3.500 7.500 H11.500 M7.500 3.500 V11.500" stroke="#3c4ba6" stroke-width="1.400"/></svg>
<svg class="a" style="left:55.4px;top:547.7px" width="26" height="21"><use href="#fold"/></svg>
<div class="t dj tree" style="left:85.6px;top:551.9px">pdfbox-2.0.7</div>
<div class="a" style="left:48px;top:583.4px;width:8px;height:0;border-top:1px dotted #9a9a9a"></div>
<svg class="a" style="left:34.05px;top:576.11px" width="15" height="15" viewBox="0 0 15 15"><rect x="1" y="1" width="13" height="13" rx="1.600" fill="url(#gbx)" stroke="#a0a0a0" stroke-width="1"/><path d="M3.500 7.500 H11.500 M7.500 3.500 V11.500" stroke="#3c4ba6" stroke-width="1.400"/></svg>
<svg class="a" style="left:55.4px;top:572.6px" width="26" height="21"><use href="#fold"/></svg>
<div class="t dj tree" style="left:85.6px;top:576.8px">pdfcompare-master</div>
<div class="a" style="left:48px;top:608.3px;width:8px;height:0;border-top:1px dotted #9a9a9a"></div>
<svg class="a" style="left:34.05px;top:600.98px" width="15" height="15" viewBox="0 0 15 15"><rect x="1" y="1" width="13" height="13" rx="1.600" fill="url(#gbx)" stroke="#a0a0a0" stroke-width="1"/><path d="M3.500 7.500 H11.500 M7.500 3.500 V11.500" stroke="#3c4ba6" stroke-width="1.400"/></svg>
<svg class="a" style="left:55.4px;top:597.5px" width="26" height="21"><use href="#fold"/></svg>
<div class="t dj tree" style="left:85.6px;top:601.7px">PdfiumViewer-master</div>
<div class="a" style="left:42px;top:633.1px;width:14px;height:0;border-top:1px dotted #9a9a9a"></div>
<svg class="a" style="left:55.4px;top:622.4px" width="26" height="21"><use href="#fold"/></svg>
<div class="t dj tree" style="left:85.6px;top:626.5px">py_test</div>
<div class="a" style="left:48px;top:658.0px;width:8px;height:0;border-top:1px dotted #9a9a9a"></div>
<svg class="a" style="left:34.05px;top:650.72px" width="15" height="15" viewBox="0 0 15 15"><rect x="1" y="1" width="13" height="13" rx="1.600" fill="url(#gbx)" stroke="#a0a0a0" stroke-width="1"/><path d="M3.500 7.500 H11.500 M7.500 3.500 V11.500" stroke="#3c4ba6" stroke-width="1.400"/></svg>
<svg class="a" style="left:55.4px;top:647.2px" width="26" height="21"><use href="#fold"/></svg>
<div class="t dj tree" style="left:85.6px;top:651.4px">Sandbox_Torsten</div>
<div class="a" style="left:42px;top:682.9px;width:14px;height:0;border-top:1px dotted #9a9a9a"></div>
<svg class="a" style="left:55.4px;top:672.1px" width="26" height="21"><use href="#fold"/></svg>
<div class="t dj tree" style="left:85.6px;top:676.3px">SPAM</div>
<div class="a" style="left:42px;top:707.8px;width:14px;height:0;border-top:1px dotted #9a9a9a"></div>
<svg class="a" style="left:55.4px;top:697.0px" width="26" height="21"><use href="#fold"/></svg>
<div class="t dj tree" style="left:85.6px;top:701.2px"></div>
<div class="a" style="left:298px;top:0;width:25px;height:700px;background:#f3f3f3"></div>
<div class="a" style="left:298px;top:25.7px;width:25px;height:355px;background:#d0d0d0"></div>
<svg class="a" style="left:305.2px;top:9.6px" width="11" height="9" viewBox="0 0 11 9"><path d="M1.800 6.500 L5.500 2.600 L9.200 6.500" fill="none" stroke="#454545" stroke-width="1.800"/></svg>
<svg class="a" style="left:305.5px;top:682.3px" width="11" height="9" viewBox="0 0 11 9"><path d="M1.800 2.500 L5.500 6.400 L9.200 2.500" fill="none" stroke="#454545" stroke-width="1.800"/></svg>
</div>
<div class="a" style="left:326px;top:175px;width:5px;height:727px;background:#a3a3a3"></div>
<div class="a" style="left:331px;top:175px;width:338px;height:727px;overflow:hidden;background:#fafafa">
<svg class="a" style="left:3.5px;top:2.3px" width="15" height="22"><use href="#wfold"/></svg>
<div class="t dj fl" style="left:26.69999999999999px;top:5.9px">compare</div>
<svg class="a" style="left:3.5px;top:28.0px" width="15" height="22"><use href="#wfold"/></svg>
<div class="t dj fl" style="left:26.69999999999999px;top:31.6px">scanned</div>
<svg class="a" style="left:0.10000000000002274px;top:54.0px" width="24" height="21"><use href="#pdf"/></svg>
<div class="t dj fl" style="left:26.69999999999999px;top:57.2px">A Quick Guide to AODV Routing.pdf</div>
<svg class="a" style="left:0.10000000000002274px;top:79.7px" width="24" height="21"><use href="#pdfs"/></svg>
<div class="a" style="left:25px;top:78.6px;width:198px;height:24.500px;border:1px dotted #cfcfcf;background:#f4f4f4"></div>
<div class="t dj fl" style="left:26.69999999999999px;top:82.9px">Dalvik-VM-Internals.pdf</div>
<svg class="a" style="left:0.10000000000002274px;top:105.4px" width="24" height="21"><use href="#pdf"/></svg>
<div class="t dj fl" style="left:26.69999999999999px;top:108.6px">form.pdf</div>
<svg class="a" style="left:0.10000000000002274px;top:131.1px" width="24" height="21"><use href="#pdf"/></svg>
<div class="t dj fl" style="left:26.69999999999999px;top:134.3px">Formatbeschreibung_diamant.pdf</div>
<svg class="a" style="left:0.10000000000002274px;top:156.7px" width="24" height="21"><use href="#pdf"/></svg>
<div class="t dj fl" style="left:26.69999999999999px;top:159.9px">Images.pdf</div>
<svg class="a" style="left:1.1999999999999886px;top:180.6px" width="22.800" height="22.800"><use href="#chrome"/></svg>
<div class="t dj fl" style="left:26.69999999999999px;top:185.6px">license.svg</div>
<svg class="a" style="left:0.10000000000002274px;top:208.1px" width="24" height="21"><use href="#pdf"/></svg>
<div class="t dj fl" style="left:26.69999999999999px;top:211.3px">license_German.pdf</div>
<svg class="a" style="left:1.1999999999999886px;top:231.9px" width="22.800" height="22.800"><use href="#chrome"/></svg>
<div class="t dj fl" style="left:26.69999999999999px;top:236.9px">license_German.svg</div>
<svg class="a" style="left:0.8999999999999773px;top:255.7px" width="23.500" height="25.500"><use href="#npp"/></svg>
<div class="t dj fl" style="left:26.69999999999999px;top:262.6px">license_German.txt</div>
<svg class="a" style="left:0.10000000000002274px;top:285.1px" width="24" height="21"><use href="#pdf"/></svg>
<div class="t dj fl" style="left:26.69999999999999px;top:288.3px">license_German_water.pdf</div>
<svg class="a" style="left:0.10000000000002274px;top:310.7px" width="24" height="21"><use href="#pdf"/></svg>
<div class="t dj fl" style="left:26.69999999999999px;top:313.9px">out.pdf</div>
<svg class="a" style="left:2.3000000000000114px;top:333.5px" width="20.600" height="24.500"><use href="#odt"/></svg>
<div class="t dj fl" style="left:26.69999999999999px;top:339.6px">PDF24 Fax Test.odt</div>
<svg class="a" style="left:0.10000000000002274px;top:362.1px" width="24" height="21"><use href="#pdf"/></svg>
<div class="t dj fl" style="left:26.69999999999999px;top:365.3px">pp_websitepaymentspro_nvpapi_guide.pdf</div>
<svg class="a" style="left:0.10000000000002274px;top:387.8px" width="24" height="21"><use href="#pdf"/></svg>
<div class="t dj fl" style="left:26.69999999999999px;top:390.9px">scanned.pdf</div>
<svg class="a" style="left:2.3000000000000114px;top:410.5px" width="20.600" height="24.500"><use href="#odt"/></svg>
<div class="t dj fl" style="left:26.69999999999999px;top:416.6px">Schrifttest.odt</div>
<svg class="a" style="left:4.5px;top:437.5px" width="16.600" height="20.500"><use href="#ffx"/></svg>
<div class="t dj fl" style="left:26.69999999999999px;top:442.3px">Schrifttäst.html</div>
<svg class="a" style="left:0.10000000000002274px;top:464.8px" width="24" height="21"><use href="#pdf"/></svg>
<div class="t dj fl" style="left:26.69999999999999px;top:468.0px">Schrifttäst.pdf</div>
<svg class="a" style="left:0.10000000000002274px;top:490.4px" width="24" height="21"><use href="#pdf"/></svg>
<div class="t dj fl" style="left:26.69999999999999px;top:493.6px">scrum.pdf</div>
<svg class="a" style="left:0.10000000000002274px;top:516.1px" width="24" height="21"><use href="#pdf"/></svg>
<div class="t dj fl" style="left:26.69999999999999px;top:519.3px">table.pdf</div>
<svg class="a" style="left:0.10000000000002274px;top:541.8px" width="24" height="21"><use href="#pdf"/></svg>
<div class="t dj fl" style="left:26.69999999999999px;top:545.0px">test.pdf</div>
<svg class="a" style="left:1.1999999999999886px;top:565.6px" width="22.800" height="22.800"><use href="#chrome"/></svg>
<div class="t dj fl" style="left:26.69999999999999px;top:570.6px">test.svg</div>
<svg class="a" style="left:1.8999999999999773px;top:594.0px" width="22" height="16"><use href="#tif"/></svg>
<div class="t dj fl" style="left:26.69999999999999px;top:596.3px">test.tiff</div>
<svg class="a" style="left:0.8999999999999773px;top:615.1px" width="23.500" height="25.500"><use href="#npp"/></svg>
<div class="t dj fl" style="left:26.69999999999999px;top:622.0px">test.txt</div>
</div>
<div class="a" style="left:669px;top:141px;width:6px;height:761px;background:linear-gradient(90deg,#a8a8a8 0,#8a8a8a 1.500px,#808080 100%)"></div>
<div class="a" style="left:675px;top:141px;width:897px;height:761px;background:#2b2b2b;overflow:hidden">
<div class="a" style="left:0;top:0;width:897px;height:0;transform:translateY(.5px)"><div class="a" style="left:16px;top:12px;width:865px;height:232px;background:#fafafa"></div><div class="a" style="left:16px;top:12px;width:865px;height:23px;background:linear-gradient(#e6e8ee,#eceef2 50%,#fafafa)"></div><div class="t ct" style="left:24px;top:26.2px;font-size:18.05px">license_German (Pages: 4)</div><div class="a" style="left:19px;top:53px;width:859px;height:1.500px;background:#d4d4d6"></div><svg class="a" style="left:786.5px;top:19.599999999999994px" width="88" height="25" viewBox="0 0 88 25"><g fill="#fdfdfd" stroke="#23306a" stroke-width="1.500" stroke-linejoin="round"><path d="M1.700 2.300 Q1.700 1 3 1 H20.500 Q21.800 1 21.800 2.300 V21.500 Q21.800 22.800 20.500 22.800 H3.500 L1.700 21 Z"/><rect x="6" y="13.500" width="12.500" height="9.300" fill="#fdfdfd"/><rect x="7.200" y="14.700" width="3.300" height="8" fill="#23306a" stroke="none" opacity=".55"/></g><g fill="#fdfdfd" stroke="#23306a" stroke-width="1.500" stroke-linejoin="round"><path d="M36 9 V2 H50 V9"/><path d="M33.500 9 H52.500 Q55 9 55 11.500 V17.500 Q55 19.500 53 19.500 H33 Q31 19.500 31 17.500 V11.500 Q31 9 33.500 9 Z"/><rect x="36" y="16" width="14" height="6.500" rx="1"/></g><path d="M63.0 4.6 L66.7 0.9 L74.0 8.2 L81.3 0.9 L85.0 4.6 L77.7 11.9 L85.0 19.2 L81.3 22.9 L74.0 15.6 L66.7 22.9 L63.0 19.2 L70.3 11.9 Z" fill="#fdfdfd" stroke="#23306a" stroke-width="1.600" stroke-linejoin="round"/></svg><div class="a" style="left:17px;top:217.0px;width:863px;height:27px;background:#f1f1f2"></div><svg class="a" style="left:27.5px;top:222.2px" width="10" height="12" viewBox="0 0 10 12"><path d="M7.300 2 L2.500 6 L7.300 10" fill="none" stroke="#bdbdbd" stroke-width="2"/></svg><svg class="a" style="left:858.5px;top:222.2px" width="10" height="12" viewBox="0 0 10 12"><path d="M2.700 2 L7.500 6 L2.700 10" fill="none" stroke="#bdbdbd" stroke-width="2"/></svg><div class="a" style="left:19px;top:57px;width:862px;height:156px;overflow:hidden"><div class="a" style="left:8.5px;top:4px;width:144px;height:144px;border:1px solid #dadadd;background:#fcfcfc"><svg class="a" style="left:-1px;top:-1px" width="144" height="144" viewBox="0 0 144 144"><path d="M24 4.5 h26 M103 4.5 h15 M24 7.3 h40 M24 9.6 h17 M24 14.1 h86.5 M24 16.4 h91.5 M24 18.8 h91.5 M24 21.2 h85.5 M24 23.5 h27 M24 28.3 h87.5 M24 30.6 h91.5 M24 33.0 h87.5 M24 35.3 h42 M24 40.1 h91.5 M24 42.4 h70 M24 47.2 h91.5 M24 49.5 h90.5 M24 51.9 h91.5 M24 54.2 h87.5 M24 56.6 h69 M24 61.3 h85.5 M24 63.7 h30 M24 68.4 h86.5 M24 70.8 h86.5 M24 73.1 h22 M24 77.9 h87.5 M24 80.2 h88.5 M24 82.5 h91.5 M24 84.9 h90.5 M24 87.2 h91.5 M24 89.6 h32 M24 94.3 h88.5 M24 96.7 h90.5 M24 99.0 h87.5 M24 101.4 h30 M24 106.1 h89.5 M24 108.5 h87.5 M24 110.8 h85.5 M24 113.2 h86.5 M24 115.5 h90.5 M24 117.9 h28 M24 122.6 h87.5 M24 125.0 h86.5 M24 127.3 h90.5 M24 129.7 h89.5 M24 132.0 h91.5 M24 134.4 h23" stroke="#8f8f8f" stroke-width="1.100" fill="none" opacity=".55" stroke-dasharray="3.200 .7 1.800 .6 4.100 .8 2.500 .6 1.200 .5 3.600 .7 2.200 .6"/></svg></div><div class="a" style="left:168.6px;top:4px;width:144px;height:144px;border:1px solid #dadadd;background:#fcfcfc"><svg class="a" style="left:-1px;top:-1px" width="144" height="144" viewBox="0 0 144 144"><path d="M24 4.5 h26 M103 4.5 h15 M24 7.3 h37 M24 9.6 h20 M24 14.1 h90.5 M24 16.4 h90.5 M24 18.8 h86.5 M24 21.2 h91.5 M24 23.5 h25 M24 28.3 h90.5 M24 30.6 h85.5 M24 33.0 h79 M24 37.7 h88.5 M24 40.1 h86.5 M24 42.4 h18 M24 47.2 h88.5 M24 49.5 h88.5 M24 51.9 h88.5 M24 54.2 h88.5 M24 56.6 h39 M24 61.3 h91.5 M24 63.7 h88.5 M24 66.0 h90.5 M24 68.4 h85.5 M24 70.7 h17 M24 75.5 h87.5 M24 77.8 h88.5 M24 80.1 h88.5 M24 82.5 h63 M24 87.2 h86.5 M24 89.6 h48 M24 94.3 h85.5 M24 96.7 h23 M24 101.4 h87.5 M24 103.8 h85.5 M24 106.1 h88.5 M24 108.5 h91.5 M24 110.8 h22 M24 115.6 h90.5 M24 117.9 h86.5 M24 120.3 h91.5 M24 122.6 h78 M24 127.4 h90.5 M24 129.7 h87.5 M24 132.1 h85.5 M24 134.4 h90.5" stroke="#8f8f8f" stroke-width="1.100" fill="none" opacity=".55" stroke-dasharray="3.200 .7 1.800 .6 4.100 .8 2.500 .6 1.200 .5 3.600 .7 2.200 .6"/></svg></div><div class="a" style="left:328.7px;top:4px;width:144px;height:144px;border:1px solid #dadadd;background:#fcfcfc"><svg class="a" style="left:-1px;top:-1px" width="144" height="144" viewBox="0 0 144 144"><path d="M24 4.5 h26 M103 4.5 h15 M24 7.3 h44 M24 9.6 h24 M24 14.1 h89.5 M24 16.4 h90.5 M24 18.8 h90.5 M24 21.2 h15 M24 25.9 h87.5 M24 28.3 h88.5 M24 30.6 h87.5 M24 33.0 h25 M24 37.7 h87.5 M24 40.1 h87.5 M24 42.4 h86.5 M24 44.8 h20 M24 49.5 h90.5 M24 51.9 h86.5 M24 54.2 h88.5 M24 56.6 h86.5 M24 58.9 h69 M24 63.7 h90.5 M24 66.0 h90.5 M24 68.4 h21 M24 73.1 h90.5 M24 75.5 h79 M24 80.2 h91.5 M24 82.5 h85.5 M24 84.9 h86.5 M24 87.2 h88.5 M24 89.6 h85.5 M24 91.9 h28 M24 96.7 h90.5 M24 99.0 h86.5 M24 101.4 h90.5 M24 103.7 h68 M24 108.5 h85.5 M24 110.8 h49 M24 115.6 h88.5 M24 117.9 h89.5 M24 120.3 h58 M24 125.0 h90.5 M24 127.4 h15 M24 132.1 h91.5 M24 134.5 h88.5" stroke="#8f8f8f" stroke-width="1.100" fill="none" opacity=".55" stroke-dasharray="3.200 .7 1.800 .6 4.100 .8 2.500 .6 1.200 .5 3.600 .7 2.200 .6"/></svg></div><div class="a" style="left:488.8px;top:4px;width:144px;height:144px;border:1px solid #dadadd;background:#fcfcfc"><svg class="a" style="left:-1px;top:-1px" width="144" height="144" viewBox="0 0 144 144"><path d="M24 4.5 h26 M103 4.5 h15 M24 7.3 h31 M24 9.6 h21 M24 14.1 h87.5 M24 16.4 h91.5 M24 18.8 h90.5 M24 21.2 h88.5 M24 23.5 h77 M24 28.3 h86.5 M24 30.6 h85.5 M24 33.0 h90.5 M24 35.3 h19 M24 40.1 h88.5 M24 42.4 h89.5 M24 44.8 h91.5 M24 47.1 h90.5 M24 49.5 h86.5 M24 51.8 h61 M24 56.6 h88.5 M24 58.9 h32 M24 63.7 h89.5 M24 66.0 h88.5 M24 68.4 h88.5 M24 70.7 h89.5 M24 73.0 h85.5 M24 75.4 h48 M24 80.1 h90.5 M24 82.5 h86.5 M24 84.8 h89.5 M24 87.2 h86.5 M24 89.5 h61 M24 94.3 h88.5 M24 96.6 h85.5 M24 99.0 h45 M24 103.7 h87.5 M24 106.1 h88.5 M24 108.4 h91.5 M24 110.8 h87.5 M24 113.1 h15 M24 117.9 h90.5 M24 120.2 h90.5 M24 122.6 h53 M24 127.3 h89.5 M24 129.7 h85.5 M24 132.0 h90.5 M24 134.4 h89.5" stroke="#8f8f8f" stroke-width="1.100" fill="none" opacity=".55" stroke-dasharray="3.200 .7 1.800 .6 4.100 .8 2.500 .6 1.200 .5 3.600 .7 2.200 .6"/></svg></div></div></div>
<div class="a" style="left:0;top:0;width:897px;height:0;transform:translateY(.5px)"><div class="a" style="left:16px;top:261px;width:865px;height:232px;background:#fafafa"></div><div class="a" style="left:16px;top:261px;width:865px;height:23px;background:linear-gradient(#e6e8ee,#eceef2 50%,#fafafa)"></div><div class="t ct" style="left:24px;top:275.2px;font-size:17.55px">Images (Pages: 2)</div><div class="a" style="left:19px;top:302px;width:859px;height:1.500px;background:#d4d4d6"></div><svg class="a" style="left:786.5px;top:268.6px" width="88" height="25" viewBox="0 0 88 25"><g fill="#fdfdfd" stroke="#23306a" stroke-width="1.500" stroke-linejoin="round"><path d="M1.700 2.300 Q1.700 1 3 1 H20.500 Q21.800 1 21.800 2.300 V21.500 Q21.800 22.800 20.500 22.800 H3.500 L1.700 21 Z"/><rect x="6" y="13.500" width="12.500" height="9.300" fill="#fdfdfd"/><rect x="7.200" y="14.700" width="3.300" height="8" fill="#23306a" stroke="none" opacity=".55"/></g><g fill="#fdfdfd" stroke="#23306a" stroke-width="1.500" stroke-linejoin="round"><path d="M36 9 V2 H50 V9"/><path d="M33.500 9 H52.500 Q55 9 55 11.500 V17.500 Q55 19.500 53 19.500 H33 Q31 19.500 31 17.500 V11.500 Q31 9 33.500 9 Z"/><rect x="36" y="16" width="14" height="6.500" rx="1"/></g><path d="M63.0 4.6 L66.7 0.9 L74.0 8.2 L81.3 0.9 L85.0 4.6 L77.7 11.9 L85.0 19.2 L81.3 22.9 L74.0 15.6 L66.7 22.9 L63.0 19.2 L70.3 11.9 Z" fill="#fdfdfd" stroke="#23306a" stroke-width="1.600" stroke-linejoin="round"/></svg><div class="a" style="left:17px;top:466.0px;width:863px;height:27px;background:#f1f1f2"></div><svg class="a" style="left:27.5px;top:471.2px" width="10" height="12" viewBox="0 0 10 12"><path d="M7.300 2 L2.500 6 L7.300 10" fill="none" stroke="#bdbdbd" stroke-width="2"/></svg><svg class="a" style="left:858.5px;top:471.2px" width="10" height="12" viewBox="0 0 10 12"><path d="M2.700 2 L7.500 6 L2.700 10" fill="none" stroke="#bdbdbd" stroke-width="2"/></svg><div class="a" style="left:19px;top:306px;width:862px;height:156px;overflow:hidden"><div class="a" style="left:8.5px;top:4px;width:144px;height:144px;border:1px solid #dadadd;background:#fcfcfc"><svg class="a" style="left:.5px;top:26.600px" width="141" height="87.500" viewBox="0 0 141 87.500"><defs><linearGradient id="p1" x1="0" y1="0" x2=".35" y2="1"><stop offset="0" stop-color="#78a238"/><stop offset=".35" stop-color="#86ab40"/><stop offset=".7" stop-color="#84a630"/><stop offset="1" stop-color="#7d9b1c"/></linearGradient><clipPath id="c1"><rect width="141" height="87.500"/></clipPath></defs><rect width="141" height="87.500" fill="url(#p1)"/><g clip-path="url(#c1)"><g filter="url(#bl2)"><ellipse cx="100" cy="70" rx="40" ry="14" fill="#8fae2c" opacity=".8"/><ellipse cx="20" cy="70" rx="20" ry="14" fill="#7a9a1c" opacity=".6"/></g><g filter="url(#bl05)"><g fill="#86a634" opacity=".9"><ellipse cx="71" cy="64.8" rx="8" ry="4" transform="rotate(20 71 64.8)"/><ellipse cx="80" cy="62" rx="7" ry="3.5" transform="rotate(-15 80 62)"/><ellipse cx="58" cy="62" rx="6" ry="3" transform="rotate(30 58 62)"/><ellipse cx="98" cy="64" rx="7" ry="3.4" transform="rotate(-10 98 64)"/><ellipse cx="92" cy="72" rx="6" ry="3" transform="rotate(15 92 72)"/><ellipse cx="119" cy="72" rx="6" ry="3" transform="rotate(-10 119 72)"/><ellipse cx="66" cy="54" rx="5" ry="2.6" transform="rotate(40 66 54)"/></g><g fill="none" stroke="#3a3612" stroke-linecap="round"><path d="M37.800 62.100 Q50 70 65.600 73.300 T92.400 79.800 T113.800 75.500 T141 80" stroke-width="1.500"/><path d="M56 46.600 Q60 60 65.600 73.300" stroke-width="1.300"/><path d="M81.700 43.400 V57.300 Q95 62 109.500 64.800 L113.800 75.500" stroke-width="1.200"/><path d="M124.500 46.600 L141 55.100 M118 76 L141 86" stroke-width="1"/></g><g fill="#3f7232"><ellipse cx="120" cy="58" rx="8" ry="4" transform="rotate(-10 120 58)"/><ellipse cx="132" cy="62" rx="7" ry="3.5" transform="rotate(30 132 62)"/><ellipse cx="112" cy="44" rx="7" ry="3" transform="rotate(20 112 44)"/><ellipse cx="138" cy="48" rx="5" ry="4" transform="rotate(-60 138 48)"/><ellipse cx="126" cy="74" rx="7" ry="3" transform="rotate(10 126 74)"/><ellipse cx="100" cy="58" rx="6" ry="3" transform="rotate(35 100 58)"/><ellipse cx="130" cy="31" rx="5" ry="2" transform="rotate(-40 130 31)"/><ellipse cx="88" cy="66" rx="6" ry="3" transform="rotate(10 88 66)"/><ellipse cx="76" cy="56" rx="5" ry="2.5" transform="rotate(-20 76 56)"/><ellipse cx="97.8" cy="38" rx="8" ry="4" transform="rotate(25 97.8 38)"/><ellipse cx="73" cy="46.6" rx="7" ry="3.6" transform="rotate(-35 73 46.6)"/><ellipse cx="90.3" cy="53" rx="7.5" ry="3.6" transform="rotate(15 90.3 53)"/><ellipse cx="117" cy="47.6" rx="7" ry="3.4" transform="rotate(-30 117 47.6)"/><ellipse cx="124.5" cy="63.7" rx="7" ry="3.4" transform="rotate(40 124.5 63.7)"/><ellipse cx="134" cy="70" rx="6" ry="3" transform="rotate(20 134 70)"/><ellipse cx="128" cy="53" rx="6" ry="3" transform="rotate(10 128 53)"/><ellipse cx="110" cy="57" rx="6" ry="3" transform="rotate(-20 110 57)"/><ellipse cx="84" cy="40" rx="6" ry="3.2" transform="rotate(-30 84 40)"/><ellipse cx="133" cy="40" rx="6" ry="2.6" transform="rotate(-35 133 40)"/><ellipse cx="56" cy="44" rx="5" ry="2.6" transform="rotate(-50 56 44)"/><ellipse cx="104" cy="70" rx="6" ry="3" transform="rotate(30 104 70)"/></g><g fill="#4c8236"><ellipse cx="133" cy="20" rx="7" ry="1.8" transform="rotate(-30 133 20)"/><ellipse cx="135" cy="25" rx="7" ry="1.8" transform="rotate(-25 135 25)"/><ellipse cx="136" cy="30" rx="7" ry="1.8" transform="rotate(-18 136 30)"/><ellipse cx="137" cy="35" rx="6" ry="1.8" transform="rotate(-10 137 35)"/></g><g fill="#5d9040" opacity=".8"><ellipse cx="98.8" cy="37" rx="4.4" ry="1.8" transform="rotate(25 98.8 37)"/><ellipse cx="74" cy="45.6" rx="3.8500000000000005" ry="1.62" transform="rotate(-35 74 45.6)"/><ellipse cx="91.3" cy="52" rx="4.125" ry="1.62" transform="rotate(15 91.3 52)"/><ellipse cx="118" cy="46.6" rx="3.8500000000000005" ry="1.53" transform="rotate(-30 118 46.6)"/><ellipse cx="125.5" cy="62.7" rx="3.8500000000000005" ry="1.53" transform="rotate(40 125.5 62.7)"/><ellipse cx="135" cy="69" rx="3.3000000000000003" ry="1.35" transform="rotate(20 135 69)"/><ellipse cx="129" cy="52" rx="3.3000000000000003" ry="1.35" transform="rotate(10 129 52)"/><ellipse cx="111" cy="56" rx="3.3000000000000003" ry="1.35" transform="rotate(-20 111 56)"/></g><g fill="#f4b68a"><ellipse cx="37.8" cy="25.2" rx="9" ry="7.5" transform="rotate(-25 37.8 25.2)"/><ellipse cx="44" cy="21" rx="5" ry="8" transform="rotate(-35 44 21)"/><ellipse cx="30" cy="30" rx="6" ry="3" transform="rotate(-20 30 30)"/><ellipse cx="48" cy="33" rx="3" ry="7" transform="rotate(-40 48 33)"/></g><g fill="#f3c35a"><ellipse cx="38" cy="23" rx="4.5" ry="5.5" transform="rotate(-25 38 23)"/></g><g fill="#ef8c74"><ellipse cx="30.5" cy="28" rx="3.5" ry="1.8" transform="rotate(-25 30.5 28)"/><ellipse cx="45" cy="17" rx="2.2" ry="4" transform="rotate(-30 45 17)"/></g><path d="M61.500 9 Q66.500 16 63.500 24 Q61.500 30 58.200 33.500 Q59.500 26 60 20 Q59.500 14 61.500 9Z" fill="#ee7e3e"/><path d="M62 12 Q64.500 17 62.800 23 Q61.600 27 60.400 29 Q61.200 20 62 12Z" fill="#f4a452"/><g fill="#f4cba8"><ellipse cx="71" cy="32.7" rx="7.5" ry="4.6" transform="rotate(-20 71 32.7)"/><ellipse cx="67" cy="36" rx="3" ry="5" transform="rotate(20 67 36)"/><ellipse cx="78" cy="45" rx="1.8" ry="4" transform="rotate(-10 78 45)"/></g><g fill="#f09a86"><ellipse cx="76" cy="29.5" rx="4" ry="2" transform="rotate(-30 76 29.5)"/></g><g fill="#f6cfa8"><ellipse cx="33.5" cy="50.9" rx="8" ry="10" transform="rotate(-30 33.5 50.9)"/><ellipse cx="28" cy="44" rx="5" ry="3" transform="rotate(25 28 44)"/><ellipse cx="40" cy="49" rx="4" ry="5" transform="rotate(-10 40 49)"/></g><g fill="#f8e2c0"><ellipse cx="33" cy="52" rx="4" ry="6" transform="rotate(-30 33 52)"/></g><g fill="#f2a88e"><ellipse cx="27.5" cy="43.5" rx="3" ry="1.5" transform="rotate(25 27.5 43.5)"/><ellipse cx="32" cy="60" rx="2.5" ry="2"/></g></g></g></svg></div><div class="a" style="left:168.6px;top:4px;width:144px;height:144px;border:1px solid #dadadd;background:#fcfcfc"><svg class="a" style="left:.5px;top:26.600px" width="141" height="87.500" viewBox="0 0 141 87.500"><defs><radialGradient id="p2" cx=".52" cy=".25" r=".85"><stop offset="0" stop-color="#4fa56e"/><stop offset=".45" stop-color="#3a9a5c"/><stop offset=".8" stop-color="#268e4c"/><stop offset="1" stop-color="#1a8642"/></radialGradient><clipPath id="c2"><rect width="141" height="87.500"/></clipPath></defs><rect width="141" height="87.500" fill="url(#p2)"/><g clip-path="url(#c2)"><g filter="url(#bl2)"><ellipse cx="70" cy="64" rx="45" ry="8" fill="#4fa888" opacity=".7"/><ellipse cx="40" cy="72" rx="10" ry="5" fill="#7fc0b8" opacity=".6"/><ellipse cx="110" cy="74" rx="12" ry="8" fill="#48a070" opacity=".7"/><ellipse cx="128" cy="80" rx="14" ry="8" fill="#15803c" opacity=".8"/></g><g filter="url(#bl1)"><g fill="#1d7a3c"><ellipse cx="77.4" cy="44.4" rx="5" ry="5"/><ellipse cx="9" cy="47" rx="5" ry="5"/><ellipse cx="122.4" cy="39" rx="3.6" ry="3.6"/><ellipse cx="126" cy="34" rx="2.5" ry="2.8"/><ellipse cx="30" cy="50" rx="6" ry="4"/><ellipse cx="48" cy="44" rx="4" ry="4"/><ellipse cx="99" cy="42" rx="4" ry="4"/><ellipse cx="40" cy="60" rx="8" ry="4"/><ellipse cx="64" cy="52" rx="5" ry="3"/><ellipse cx="114" cy="56" rx="5" ry="3"/></g><g fill="#7a4cc2"><ellipse cx="12.1" cy="33.7" rx="8" ry="7"/><ellipse cx="41" cy="35.9" rx="8" ry="5.5"/><ellipse cx="32.4" cy="41.2" rx="4.5" ry="3.6"/><ellipse cx="56" cy="48.7" rx="5.5" ry="5"/><ellipse cx="71" cy="43.4" rx="5" ry="4"/><ellipse cx="78.5" cy="32.7" rx="6" ry="5"/><ellipse cx="88.1" cy="44.4" rx="5" ry="4.5"/><ellipse cx="96.7" cy="48.7" rx="4" ry="4.5"/><ellipse cx="104.2" cy="34.8" rx="6.5" ry="5"/><ellipse cx="112.7" cy="40.1" rx="3.6" ry="4"/><ellipse cx="127.7" cy="46.6" rx="5" ry="4.5"/><ellipse cx="132" cy="55.1" rx="2.6" ry="3"/><ellipse cx="15.3" cy="48.7" rx="5" ry="4"/><ellipse cx="13.2" cy="54" rx="4" ry="3"/><ellipse cx="4.6" cy="37" rx="3.5" ry="4"/><ellipse cx="20" cy="41" rx="3" ry="4"/><ellipse cx="66" cy="37" rx="3" ry="3.5"/><ellipse cx="52" cy="37" rx="3" ry="2.5"/><ellipse cx="134" cy="42" rx="3" ry="3.5"/><ellipse cx="119" cy="49" rx="3" ry="3"/></g><g fill="#a884e2"><ellipse cx="14" cy="31" rx="4" ry="3.5"/><ellipse cx="43" cy="34" rx="4.5" ry="3"/><ellipse cx="56" cy="47" rx="3.5" ry="3"/><ellipse cx="71" cy="42" rx="3.5" ry="2.5"/><ellipse cx="78" cy="31" rx="3.5" ry="2.8"/><ellipse cx="88" cy="43" rx="3" ry="2.6"/><ellipse cx="104" cy="33" rx="3.5" ry="2.8"/><ellipse cx="33" cy="41" rx="2.6" ry="2"/><ellipse cx="14" cy="53" rx="2.5" ry="2"/></g><g fill="#bcd4ee"><ellipse cx="83.8" cy="55" rx="5" ry="3.6"/><ellipse cx="118" cy="46.6" rx="5" ry="3.2"/><ellipse cx="27" cy="62.6" rx="3.6" ry="3.2"/><ellipse cx="138.4" cy="33.7" rx="3" ry="4"/><ellipse cx="139.5" cy="48" rx="2" ry="3"/><ellipse cx="109" cy="47" rx="3" ry="2.5"/><ellipse cx="73" cy="55" rx="3" ry="2.5"/><ellipse cx="3" cy="48" rx="2.5" ry="2.5"/></g><g fill="#8a3a4a" opacity=".7"><ellipse cx="90" cy="50" rx="2" ry="2"/><ellipse cx="50" cy="56" rx="3" ry="1.5"/></g></g></g></svg></div></div></div>
<div class="a" style="left:0;top:0;width:897px;height:0;transform:translateY(.5px)"><div class="a" style="left:16px;top:510px;width:865px;height:232px;background:#e26a6a"></div><div class="a" style="left:19px;top:513px;width:859px;height:226px;background:#fafafa"></div><div class="a" style="left:19px;top:513px;width:859px;height:20px;background:linear-gradient(#e6e8ee,#eceef2 50%,#fafafa)"></div><div class="t ct" style="left:24px;top:524.2px;font-size:18.1px">Dalvik-VM-Internals (Pages: 58)</div><div class="a" style="left:19px;top:550px;width:859px;height:1.500px;background:#d4d4d6"></div><svg class="a" style="left:786.5px;top:516.6px" width="88" height="25" viewBox="0 0 88 25"><g fill="#fdfdfd" stroke="#23306a" stroke-width="1.500" stroke-linejoin="round"><path d="M1.700 2.300 Q1.700 1 3 1 H20.500 Q21.800 1 21.800 2.300 V21.500 Q21.800 22.800 20.500 22.800 H3.500 L1.700 21 Z"/><rect x="6" y="13.500" width="12.500" height="9.300" fill="#fdfdfd"/><rect x="7.200" y="14.700" width="3.300" height="8" fill="#23306a" stroke="none" opacity=".55"/></g><g fill="#fdfdfd" stroke="#23306a" stroke-width="1.500" stroke-linejoin="round"><path d="M36 9 V2 H50 V9"/><path d="M33.500 9 H52.500 Q55 9 55 11.500 V17.500 Q55 19.500 53 19.500 H33 Q31 19.500 31 17.500 V11.500 Q31 9 33.500 9 Z"/><rect x="36" y="16" width="14" height="6.500" rx="1"/></g><path d="M63.0 4.6 L66.7 0.9 L74.0 8.2 L81.3 0.9 L85.0 4.6 L77.7 11.9 L85.0 19.2 L81.3 22.9 L74.0 15.6 L66.7 22.9 L63.0 19.2 L70.3 11.9 Z" fill="#fdfdfd" stroke="#23306a" stroke-width="1.600" stroke-linejoin="round"/></svg><div class="a" style="left:19px;top:715.0px;width:859px;height:25px;background:#f1f1f2"></div><svg class="a" style="left:27.5px;top:720.2px" width="10" height="12" viewBox="0 0 10 12"><path d="M7.300 2 L2.500 6 L7.300 10" fill="none" stroke="#4a4a4a" stroke-width="2"/></svg><svg class="a" style="left:858.5px;top:720.2px" width="10" height="12" viewBox="0 0 10 12"><path d="M2.700 2 L7.500 6 L2.700 10" fill="none" stroke="#4a4a4a" stroke-width="2"/></svg><div class="a" style="left:19px;top:555px;width:859px;height:156px;overflow:hidden"><div class="a" style="left:8.5px;top:4px;width:144px;height:144px;border:1px solid #dadadd;background:#fcfcfc"><div class="a" style="left:.3px;top:17.700px;width:141.200px;height:105.500px;background:linear-gradient(#171717 0,#232323 14%,#313131 30%,#2c2c2c 33%,#2a2a2a 42%,#191919 58%,#0b0b0b 80%,#080808 100%);overflow:hidden;color:#fff"><svg class="a" style="left:49.500px;top:1.800px" width="42" height="47.500" viewBox="0 0 60 70" preserveAspectRatio="none"><use href="#robot"/></svg><div class="t" style="left:40.2px;top:48.6px;font-size:11.6px;letter-spacing:1.75px;color:#f4f4f4;font-weight:normal">ANDROID</div><div class="t" style="left:0;width:141px;text-align:center;top:69.800px;font-size:9.900px;color:#e9e9e9">Dalvik VM Internals</div>
<div class="t" style="left:0;width:141px;text-align:center;top:86px;font-size:5.800px;color:#d8d8d8">Dan Bornstein</div>
<div class="t" style="left:0;width:141px;text-align:center;top:93px;font-size:5.800px;color:#d8d8d8">Google</div></div></div><div class="a" style="left:168.6px;top:4px;width:144px;height:144px;border:1px solid #dadadd;background:#fcfcfc"><div class="a" style="left:.3px;top:17.700px;width:141.200px;height:105.500px;background:linear-gradient(#171717 0,#232323 14%,#313131 30%,#2c2c2c 33%,#2a2a2a 42%,#191919 58%,#0b0b0b 80%,#080808 100%);overflow:hidden;color:#fff"><svg class="a" style="left:85px;top:50px" width="42" height="47.500" viewBox="0 0 60 70" preserveAspectRatio="none"><use href="#robot"/></svg>
<div class="t" style="left:10.800px;top:51.600px;font-size:5.400px;line-height:9.070px;color:#5aa53c"><span style="color:#e4e4e4">•&#8202;   Intro</span>
•&#8202;   Memory
•&#8202;   CPU
•&#8202;   Advice
•&#8202;   Conclusion</div></div></div><div class="a" style="left:328.7px;top:4px;width:144px;height:144px;border:1px solid #dadadd;background:#fcfcfc"><div class="a" style="left:.3px;top:17.700px;width:141.200px;height:105.500px;background:linear-gradient(#171717 0,#232323 14%,#313131 30%,#2c2c2c 33%,#2a2a2a 42%,#191919 58%,#0b0b0b 80%,#080808 100%);overflow:hidden;color:#fff"><div class="t" style="left:5.400px;top:3.300px;font-size:9.900px;color:#efefef">Dalvik, Iceland</div><div class="a" style="left:5.400px;top:14.600px;width:105px;height:1px;background:#8a8a8a"></div><svg class="a" style="left:109.300px;top:.2px" width="28" height="15.300" viewBox="0 0 40 24" preserveAspectRatio="none"><use href="#rhead"/></svg><div class="t" style="left:108.8px;top:92.6px;font-size:5.2px;letter-spacing:0.75px;color:#3555c8;font-weight:normal">ANDROID</div><svg class="a" style="left:36.500px;top:17px" width="67.500" height="77.800" viewBox="0 0 67.500 77.800">
<rect width="67.500" height="77.800" fill="#dadada"/>
<path d="M0 0 H67.500 V20 Q66 12 58 7.500 Q50 3 36 4.500 Q34.500 5 35.500 12 Q37 20 38 26 Q45 32 46.500 40 Q48 48 47.500 55 Q49.500 62 48.500 68 Q46.500 66 45.500 60 Q43 52 42 44 Q40 36 36 30 Q30 28 27 24 Q25.500 18 23 13 L17.500 18.500 Q19 12 17 8 L12 10.500 Q11.500 5 9.500 2.500 Q7 .5 6.500 3 Q4 1.500 2.500 2.500 Q.5 3.500 0 6 Z" fill="#232323"/>
<ellipse cx="31.300" cy="25" rx="1.500" ry="3" fill="#dadada" transform="rotate(-15 31.300 25)"/>
<circle cx="58" cy="4.500" r=".9" fill="#dadada"/>
<path d="M20.400 24.300 l.9 2 2.200 .2 -1.650 1.450 .5 2.150 -1.950 -1.150 -1.950 1.150 .5 -2.150 -1.650 -1.450 2.200 -.2z" fill="#e0301c"/>
</svg></div></div><div class="a" style="left:488.8px;top:4px;width:144px;height:144px;border:1px solid #dadadd;background:#fcfcfc"><div class="a" style="left:.3px;top:17.700px;width:141.200px;height:105.500px;background:linear-gradient(#171717 0,#232323 14%,#313131 30%,#2c2c2c 33%,#2a2a2a 42%,#191919 58%,#0b0b0b 80%,#080808 100%);overflow:hidden;color:#fff"><div class="t" style="left:5.400px;top:3.300px;font-size:9.900px;color:#efefef">The Big Picture</div><div class="a" style="left:5.400px;top:14.600px;width:105px;height:1px;background:#8a8a8a"></div><svg class="a" style="left:109.300px;top:.2px" width="28" height="15.300" viewBox="0 0 40 24" preserveAspectRatio="none"><use href="#rhead"/></svg><div class="t" style="left:108.8px;top:92.6px;font-size:5.2px;letter-spacing:0.75px;color:#3555c8;font-weight:normal">ANDROID</div><svg class="a" style="left:16.300px;top:15px" width="108.600" height="77.800" viewBox="0 0 108.600 77.800"><rect x="0" y="0" width="108.600" height="13.400" fill="#1b3592"/><rect x="0" y="13.900" width="108.600" height="18" fill="#1b3592"/><rect x="0" y="32.400" width="108.600" height="26.200" fill="#1a6c30"/><rect x="66.900" y="32.400" width="41.700" height="20.500" fill="url(#oly)"/><rect x="0" y="59.200" width="108.600" height="18.600" fill="#761212"/><rect x="3.2" y="4.7" width="16" height="4.6" rx="2.300" fill="#2b55d6"/><rect x="24.9" y="4.7" width="16" height="4.6" rx="2.300" fill="#2b55d6"/><rect x="46.5" y="4.7" width="16" height="4.6" rx="2.300" fill="#2b55d6"/><rect x="68.4" y="4.7" width="16" height="4.6" rx="2.300" fill="#2b55d6"/><rect x="90" y="4.7" width="16" height="4.6" rx="2.300" fill="#2b55d6"/><rect x="3.2" y="18.3" width="16" height="4.6" rx="2.300" fill="#2b55d6"/><rect x="24.9" y="18.3" width="16" height="4.6" rx="2.300" fill="#2b55d6"/><rect x="46.5" y="18.3" width="16" height="4.6" rx="2.300" fill="#2b55d6"/><rect x="68.4" y="18.3" width="16" height="4.6" rx="2.300" fill="#2b55d6"/><rect x="90" y="18.3" width="16" height="4.6" rx="2.300" fill="#2b55d6"/><rect x="3.2" y="25.1" width="16" height="4.6" rx="2.300" fill="#2b55d6"/><rect x="24.9" y="25.1" width="16" height="4.6" rx="2.300" fill="#2b55d6"/><rect x="46.5" y="25.1" width="16" height="4.6" rx="2.300" fill="#2b55d6"/><rect x="68.4" y="25.1" width="16" height="4.6" rx="2.300" fill="#2b55d6"/><rect x="90" y="25.1" width="16" height="4.6" rx="2.300" fill="#2b55d6"/><rect x="3.2" y="37.2" width="16" height="4.6" rx="2.300" fill="#2c9c40"/><rect x="24.9" y="37.2" width="16" height="4.6" rx="2.300" fill="#2c9c40"/><rect x="46.5" y="37.2" width="16" height="4.6" rx="2.300" fill="#2c9c40"/><rect x="3.2" y="43.7" width="16" height="4.6" rx="2.300" fill="#2c9c40"/><rect x="24.9" y="43.7" width="16" height="4.6" rx="2.300" fill="#2c9c40"/><rect x="46.5" y="43.7" width="16" height="4.6" rx="2.300" fill="#2c9c40"/><rect x="3.2" y="50.4" width="16" height="4.6" rx="2.300" fill="#2c9c40"/><rect x="24.9" y="50.4" width="16" height="4.6" rx="2.300" fill="#2c9c40"/><rect x="46.5" y="50.4" width="16" height="4.6" rx="2.300" fill="#2c9c40"/><rect x="79.3" y="37.8" width="16" height="4.6" rx="2.300" fill="#2b55d6"/><rect x="79.3" y="43.8" width="16" height="4.6" rx="2.300" fill="#e2aa1c"/><rect x="3.2" y="64.0" width="16" height="4.6" rx="2.300" fill="#c22626"/><rect x="24.9" y="64.0" width="16" height="4.6" rx="2.300" fill="#c22626"/><rect x="46.5" y="64.0" width="16" height="4.6" rx="2.300" fill="#c22626"/><rect x="68.4" y="64.0" width="16" height="4.6" rx="2.300" fill="#c22626"/><rect x="90" y="64.0" width="16" height="4.6" rx="2.300" fill="#c22626"/><rect x="3.2" y="70.6" width="16" height="4.6" rx="2.300" fill="#c22626"/><rect x="24.9" y="70.6" width="16" height="4.6" rx="2.300" fill="#c22626"/><rect x="46.5" y="70.6" width="16" height="4.6" rx="2.300" fill="#c22626"/><rect x="68.4" y="70.6" width="16" height="4.6" rx="2.300" fill="#c22626"/><rect x="90" y="70.6" width="16" height="4.6" rx="2.300" fill="#c22626"/><text x="54.3" y="3" font-family="Liberation Sans,sans-serif" font-size="2.500" font-weight="bold" fill="#d8d8d8" text-anchor="middle">APPLICATIONS</text><text x="54.3" y="16.7" font-family="Liberation Sans,sans-serif" font-size="2.500" font-weight="bold" fill="#d8d8d8" text-anchor="middle">APPLICATION FRAMEWORK</text><text x="33" y="35.6" font-family="Liberation Sans,sans-serif" font-size="2.500" font-weight="bold" fill="#d8d8d8" text-anchor="middle">LIBRARIES</text><text x="87.7" y="35.6" font-family="Liberation Sans,sans-serif" font-size="2.500" font-weight="bold" fill="#d8d8d8" text-anchor="middle">ANDROID RUNTIME</text><text x="54.3" y="62.2" font-family="Liberation Sans,sans-serif" font-size="2.500" font-weight="bold" fill="#d8d8d8" text-anchor="middle">LINUX KERNEL</text></svg></div></div><div class="a" style="left:648.9px;top:4px;width:144px;height:144px;border:1px solid #dadadd;background:#fcfcfc"><div class="a" style="left:.3px;top:17.700px;width:141.200px;height:105.500px;background:linear-gradient(#171717 0,#232323 14%,#313131 30%,#2c2c2c 33%,#2a2a2a 42%,#191919 58%,#0b0b0b 80%,#080808 100%);overflow:hidden;color:#fff"><div class="t" style="left:5.400px;top:3.300px;font-size:9.900px;color:#efefef">The Big Picture</div><div class="a" style="left:5.400px;top:14.600px;width:105px;height:1px;background:#8a8a8a"></div><svg class="a" style="left:109.300px;top:.2px" width="28" height="15.300" viewBox="0 0 40 24" preserveAspectRatio="none"><use href="#rhead"/></svg><div class="t" style="left:108.8px;top:92.6px;font-size:5.2px;letter-spacing:0.75px;color:#3555c8;font-weight:normal">ANDROID</div><svg class="a" style="left:16.300px;top:15px" width="108.600" height="77.800" viewBox="0 0 108.600 77.800"><rect x="0" y="0" width="108.600" height="13.400" fill="#1b3592"/><rect x="0" y="13.900" width="108.600" height="18" fill="#1b3592"/><rect x="0" y="32.400" width="108.600" height="26.200" fill="#1a6c30"/><rect x="66.900" y="32.400" width="41.700" height="20.500" fill="url(#oly)"/><rect x="0" y="59.200" width="108.600" height="18.600" fill="#761212"/><rect x="3.2" y="4.7" width="16" height="4.6" rx="2.300" fill="#2b55d6"/><rect x="24.9" y="4.7" width="16" height="4.6" rx="2.300" fill="#2b55d6"/><rect x="46.5" y="4.7" width="16" height="4.6" rx="2.300" fill="#2b55d6"/><rect x="68.4" y="4.7" width="16" height="4.6" rx="2.300" fill="#2b55d6"/><rect x="90" y="4.7" width="16" height="4.6" rx="2.300" fill="#2b55d6"/><rect x="3.2" y="18.3" width="16" height="4.6" rx="2.300" fill="#2b55d6"/><rect x="24.9" y="18.3" width="16" height="4.6" rx="2.300" fill="#2b55d6"/><rect x="46.5" y="18.3" width="16" height="4.6" rx="2.300" fill="#2b55d6"/><rect x="68.4" y="18.3" width="16" height="4.6" rx="2.300" fill="#2b55d6"/><rect x="90" y="18.3" width="16" height="4.6" rx="2.300" fill="#2b55d6"/><rect x="3.2" y="25.1" width="16" height="4.6" rx="2.300" fill="#2b55d6"/><rect x="24.9" y="25.1" width="16" height="4.6" rx="2.300" fill="#2b55d6"/><rect x="46.5" y="25.1" width="16" height="4.6" rx="2.300" fill="#2b55d6"/><rect x="68.4" y="25.1" width="16" height="4.6" rx="2.300" fill="#2b55d6"/><rect x="90" y="25.1" width="16" height="4.6" rx="2.300" fill="#2b55d6"/><rect x="3.2" y="37.2" width="16" height="4.6" rx="2.300" fill="#2c9c40"/><rect x="24.9" y="37.2" width="16" height="4.6" rx="2.300" fill="#2c9c40"/><rect x="46.5" y="37.2" width="16" height="4.6" rx="2.300" fill="#2c9c40"/><rect x="3.2" y="43.7" width="16" height="4.6" rx="2.300" fill="#2c9c40"/><rect x="24.9" y="43.7" width="16" height="4.6" rx="2.300" fill="#2c9c40"/><rect x="46.5" y="43.7" width="16" height="4.6" rx="2.300" fill="#2c9c40"/><rect x="3.2" y="50.4" width="16" height="4.6" rx="2.300" fill="#2c9c40"/><rect x="24.9" y="50.4" width="16" height="4.6" rx="2.300" fill="#2c9c40"/><rect x="46.5" y="50.4" width="16" height="4.6" rx="2.300" fill="#2c9c40"/><rect x="79.3" y="37.8" width="16" height="4.6" rx="2.300" fill="#2b55d6"/><rect x="79.3" y="43.8" width="16" height="4.6" rx="2.300" fill="#e2aa1c"/><rect x="3.2" y="64.0" width="16" height="4.6" rx="2.300" fill="#c22626"/><rect x="24.9" y="64.0" width="16" height="4.6" rx="2.300" fill="#c22626"/><rect x="46.5" y="64.0" width="16" height="4.6" rx="2.300" fill="#c22626"/><rect x="68.4" y="64.0" width="16" height="4.6" rx="2.300" fill="#c22626"/><rect x="90" y="64.0" width="16" height="4.6" rx="2.300" fill="#c22626"/><rect x="3.2" y="70.6" width="16" height="4.6" rx="2.300" fill="#c22626"/><rect x="24.9" y="70.6" width="16" height="4.6" rx="2.300" fill="#c22626"/><rect x="46.5" y="70.6" width="16" height="4.6" rx="2.300" fill="#c22626"/><rect x="68.4" y="70.6" width="16" height="4.6" rx="2.300" fill="#c22626"/><rect x="90" y="70.6" width="16" height="4.6" rx="2.300" fill="#c22626"/><text x="54.3" y="3" font-family="Liberation Sans,sans-serif" font-size="2.500" font-weight="bold" fill="#d8d8d8" text-anchor="middle">APPLICATIONS</text><text x="54.3" y="16.7" font-family="Liberation Sans,sans-serif" font-size="2.500" font-weight="bold" fill="#d8d8d8" text-anchor="middle">APPLICATION FRAMEWORK</text><text x="33" y="35.6" font-family="Liberation Sans,sans-serif" font-size="2.500" font-weight="bold" fill="#d8d8d8" text-anchor="middle">LIBRARIES</text><text x="87.7" y="35.6" font-family="Liberation Sans,sans-serif" font-size="2.500" font-weight="bold" fill="#d8d8d8" text-anchor="middle">ANDROID RUNTIME</text><text x="54.3" y="62.2" font-family="Liberation Sans,sans-serif" font-size="2.500" font-weight="bold" fill="#d8d8d8" text-anchor="middle">LINUX KERNEL</text><ellipse cx="87" cy="46.300" rx="11" ry="5" fill="none" stroke="#e02a1c" stroke-width="1.100"/></svg></div></div><div class="a" style="left:809.0px;top:4px;width:144px;height:144px;border:1px solid #dadadd;background:#fcfcfc"><div class="a" style="left:.3px;top:17.700px;width:141.200px;height:105.500px;background:linear-gradient(#171717 0,#232323 14%,#313131 30%,#2c2c2c 33%,#2a2a2a 42%,#191919 58%,#0b0b0b 80%,#080808 100%);overflow:hidden;color:#fff"><div class="t" style="left:5.400px;top:3.300px;font-size:9.900px;color:#efefef">What is the Dalvik VM?</div><div class="a" style="left:5.400px;top:14.600px;width:132px;height:1px;background:#8a8a8a"></div>
<div class="t" style="left:5.600px;top:17.200px;font-size:6.700px;color:#e6e6e6">It is a virtual machine to…</div>
<div class="t" style="left:6.200px;top:39.200px;font-size:5.600px;line-height:9.350px;color:#dedede">•&#8202;   run on a slow CPU
•&#8202;   with relatively little RAM
•&#8202;   on an OS without swap space</div></div></div></div></div>
<div class="a" style="left:45.799999999999955px;top:713.5px;width:81.400px;height:24px;background:#d0d0d0"></div>
</div>
<div class="a" style="left:1572px;top:142px;width:26px;height:760px;background:#f3f3f4"></div>
<svg class="a" style="left:1579.900px;top:150.300px" width="11" height="9" viewBox="0 0 11 9"><path d="M1.700 7 L5.500 2.700 L9.300 7" fill="none" stroke="#b9b9b9" stroke-width="1.800"/></svg>
<svg class="a" style="left:1579.900px;top:884.500px" width="11" height="9" viewBox="0 0 11 9"><path d="M1.700 2 L5.500 6.300 L9.300 2" fill="none" stroke="#b9b9b9" stroke-width="1.800"/></svg>
<div class="a" style="left:2px;top:902px;width:1596px;height:77px;background:linear-gradient(#e6e9ef 0,#e9ebf0 25%,#f0f2f5 55%,#fafafa 84%)"></div>
<div class="a" style="left:2px;top:902px;width:1596px;height:1px;background:#d3dbe8"></div>
<div class="t dj" style="left:1389px;top:926.500px;font-size:25.600px;font-weight:bold;letter-spacing:.6px;color:#d6d8df;-webkit-text-stroke:1.300px #d6d8df;transform:scale(1.06,.93);transform-origin:0 50%">PDF24.ORG</div>
<div class="a" style="left:0;top:0;width:1600px;height:1px;background:#1b84d9"></div><div class="a" style="left:0;top:1px;width:1600px;height:1px;background:rgba(27,132,217,.3)"></div><div class="a" style="left:0;top:979px;width:1600px;height:2px;background:#1b84d9"></div><div class="a" style="left:0;top:0;width:1px;height:981px;background:#1b84d9"></div><div class="a" style="left:1px;top:0;width:1px;height:981px;background:rgba(27,132,217,.85)"></div><div class="a" style="left:1599px;top:0;width:1px;height:981px;background:#1b84d9"></div><div class="a" style="left:1598px;top:0;width:1px;height:981px;background:rgba(27,132,217,.92)"></div>
</body></html>
